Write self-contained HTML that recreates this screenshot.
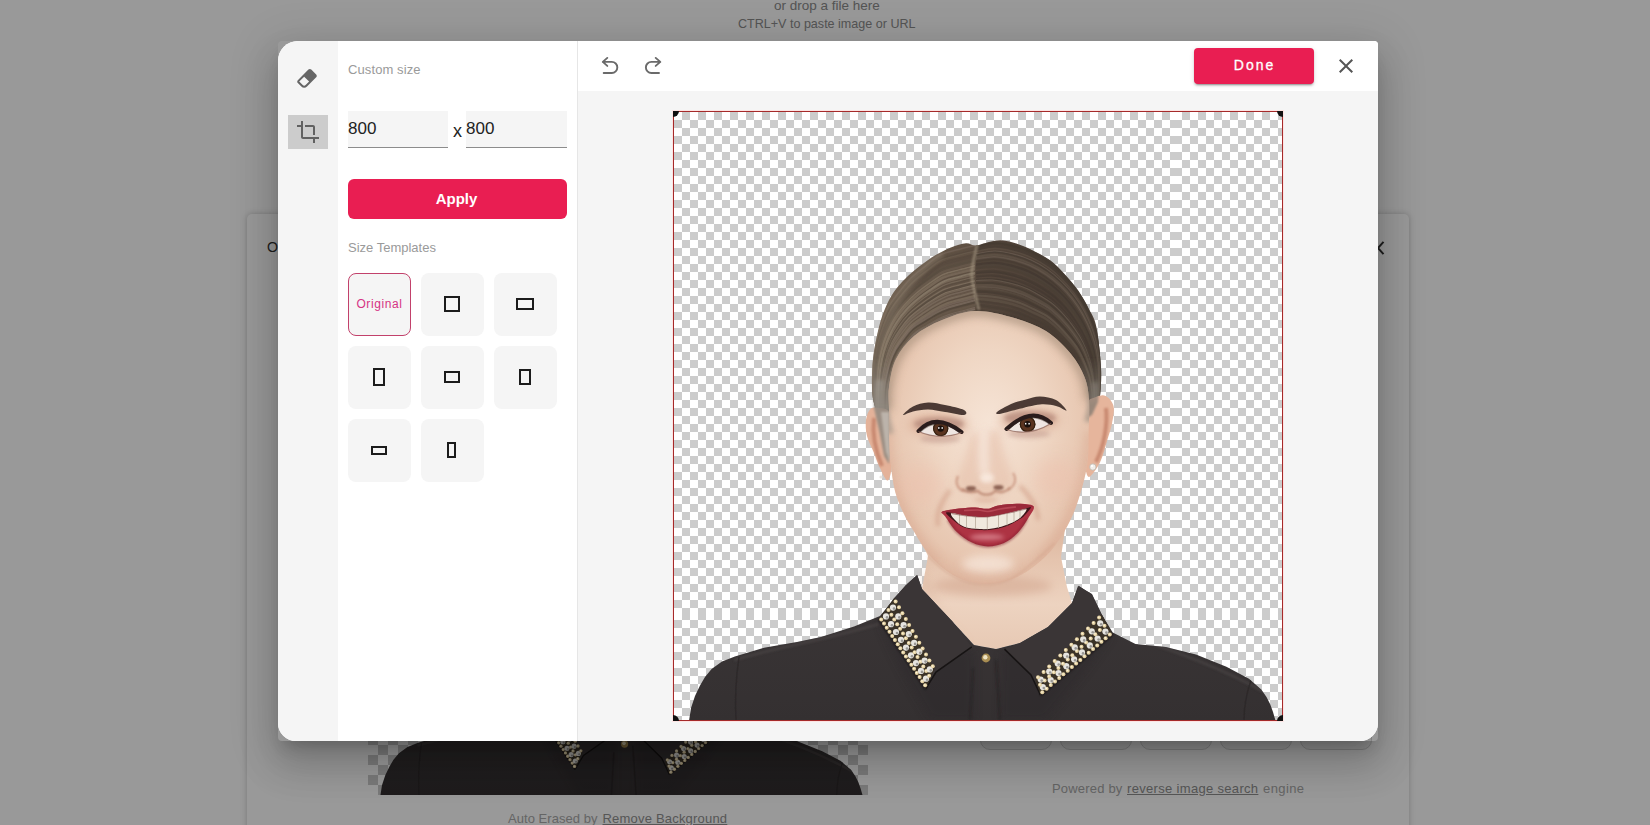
<!DOCTYPE html>
<html>
<head>
<meta charset="utf-8">
<title>Crop</title>
<style>
*{box-sizing:border-box;margin:0;padding:0}
html,body{width:1650px;height:825px;overflow:hidden;background:#fff;font-family:"Liberation Sans",sans-serif}
.abs{position:absolute}
#page{position:absolute;left:0;top:0;width:1650px;height:825px;overflow:hidden;background:#fff}
.bgtxt{position:absolute;white-space:nowrap;color:#555;font-size:13px}
#card{position:absolute;left:247px;top:214px;width:1162px;height:700px;border-radius:5px;background:#fff;box-shadow:0 0 6px rgba(0,0,0,.22)}
#overlay{position:absolute;left:0;top:0;width:1650px;height:825px;background:rgba(0,0,0,.4)}
#modal{position:absolute;left:278px;top:41px;width:1100px;height:700px;border-radius:20px 4px 18px 18px;background:#fff;overflow:hidden}
#mshadow{position:absolute;left:278px;top:41px;width:1100px;height:700px;border-radius:4px;box-shadow:0 11px 15px -7px rgba(0,0,0,.2),0 24px 38px 3px rgba(0,0,0,.14),0 9px 46px 8px rgba(0,0,0,.12)}
#side{position:absolute;left:0;top:0;width:60px;height:700px;background:#f5f5f5}
#panel{position:absolute;left:60px;top:0;width:239px;height:700px;background:#fff}
#vline{position:absolute;left:299px;top:0;width:1px;height:700px;background:#e6e6e6}
#topbar{position:absolute;left:300px;top:0;width:800px;height:50px;background:#fff}
#canvas{position:absolute;left:300px;top:50px;width:800px;height:650px;background:#f5f5f5}
.lbl{position:absolute;color:#9a9a9a;font-size:13px;white-space:nowrap}
.inp{position:absolute;top:70px;width:100px;height:37px;background:#f5f5f5;border-bottom:1px solid #8c8c8c;color:#222;font-size:17px;line-height:35px;padding-left:0}
.btn{position:absolute;background:#e91e52;color:#fff;text-align:center;white-space:nowrap}
.tile{position:absolute;width:63px;height:63px;border-radius:8px;background:#f5f5f5}
.tile i{position:absolute;border:2px solid #1c1c1c;display:block}
.ck{position:absolute;background:repeating-conic-gradient(#ccc 0 25%,#fff 0 50%) 0 0/16px 16px}
.ck10{background:repeating-conic-gradient(#fff 0 25%,#ccc 0 50%) 0 0/20px 20px}
</style>
</head>
<body>
<svg width="0" height="0" style="position:absolute">
<defs>
<symbol id="portrait" viewBox="0 0 608 608">
<defs>
<radialGradient id="gFace" cx="0.5" cy="0.42" r="0.62">
 <stop offset="0" stop-color="#f6e4d6"/><stop offset="0.45" stop-color="#efd6c3"/><stop offset="0.8" stop-color="#e7c6b0"/><stop offset="1" stop-color="#dcb199"/>
</radialGradient>
<linearGradient id="gNeck" x1="0" y1="0" x2="0" y2="1">
 <stop offset="0" stop-color="#dab49c"/><stop offset="0.3" stop-color="#e5c4ae"/><stop offset="0.65" stop-color="#edd3c0"/><stop offset="1" stop-color="#e7c9b4"/>
</linearGradient>
<linearGradient id="gHair" x1="0" y1="0" x2="1" y2="0">
 <stop offset="0" stop-color="#7b6b5a"/><stop offset="0.2" stop-color="#645547"/><stop offset="0.44" stop-color="#5f5043"/><stop offset="0.46" stop-color="#55473c"/><stop offset="0.8" stop-color="#4c3f36"/><stop offset="1" stop-color="#57493f"/>
</linearGradient>
<linearGradient id="gShirt" x1="0" y1="0" x2="0" y2="1">
 <stop offset="0" stop-color="#3b3637"/><stop offset="1" stop-color="#343031"/>
</linearGradient>
<linearGradient id="gGL" gradientUnits="userSpaceOnUse" x1="0" y1="245" x2="0" y2="295"><stop offset="0" stop-color="#8f887f" stop-opacity="0"/><stop offset="1" stop-color="#8f887f" stop-opacity="0.85"/></linearGradient>
<linearGradient id="gGR" gradientUnits="userSpaceOnUse" x1="0" y1="245" x2="0" y2="292"><stop offset="0" stop-color="#80786f" stop-opacity="0"/><stop offset="1" stop-color="#80786f" stop-opacity="0.75"/></linearGradient>
<linearGradient id="gEar" x1="0" y1="0" x2="1" y2="0">
 <stop offset="0" stop-color="#e7b9a0"/><stop offset="1" stop-color="#d39a80"/>
</linearGradient>
<filter id="b2" filterUnits="userSpaceOnUse" x="0" y="0" width="608" height="608"><feGaussianBlur stdDeviation="2"/></filter>
<filter id="b4" filterUnits="userSpaceOnUse" x="0" y="0" width="608" height="608"><feGaussianBlur stdDeviation="4"/></filter>
<filter id="b8" filterUnits="userSpaceOnUse" x="0" y="0" width="608" height="608"><feGaussianBlur stdDeviation="8"/></filter>
<filter id="b1" filterUnits="userSpaceOnUse" x="0" y="0" width="608" height="608"><feGaussianBlur stdDeviation="0.8"/></filter>
<filter id="b05" filterUnits="userSpaceOnUse" x="0" y="0" width="608" height="608"><feGaussianBlur stdDeviation="0.5"/></filter>
<clipPath id="cFace"><path id="facePath" d="M215.0 298.0C215.0 290.2 213.8 283.5 215.0 275.0C216.2 266.5 217.8 255.5 222.0 247.0C226.2 238.5 232.3 230.5 240.0 224.0C247.7 217.5 257.8 212.2 268.0 208.0C278.2 203.8 289.5 199.5 301.0 199.0C312.5 198.5 325.2 201.7 337.0 205.0C348.8 208.3 362.0 212.8 372.0 219.0C382.0 225.2 390.6 234.3 397.0 242.0C403.4 249.7 407.5 257.3 410.5 265.0C413.5 272.7 414.3 278.5 415.0 288.0C415.7 297.5 414.8 311.0 414.5 322.0C414.2 333.0 414.9 342.3 413.0 354.0C411.1 365.7 406.8 381.0 403.0 392.0C399.2 403.0 395.2 411.3 390.0 420.0C384.8 428.7 379.5 436.7 372.0 444.0C364.5 451.3 354.5 459.3 345.0 464.0C335.5 468.7 325.0 471.7 315.0 472.0C305.0 472.3 294.5 470.3 285.0 466.0C275.5 461.7 265.7 454.0 258.0 446.0C250.3 438.0 243.8 425.7 239.0 418.0C234.2 410.3 232.0 406.5 229.0 400.0C226.0 393.5 223.1 387.3 221.0 379.0C218.9 370.7 217.5 359.5 216.5 350.0C215.5 340.5 215.2 330.7 215.0 322.0C214.8 313.3 215.0 305.8 215.0 298.0Z"/></clipPath>
<clipPath id="cHair"><path d="M213.0 322.0C212.2 321.3 211.3 317.2 210.0 314.0C208.7 310.8 206.7 306.8 205.0 303.0C203.3 299.2 201.2 295.7 200.0 291.0C198.8 286.3 198.2 282.3 198.0 275.0C197.8 267.7 198.0 256.3 199.0 247.0C200.0 237.7 202.1 227.2 204.0 219.0C205.9 210.8 207.9 204.4 210.5 198.0C213.1 191.6 216.0 185.8 219.5 180.5C223.0 175.2 227.0 171.0 231.5 166.5C236.0 162.0 241.5 157.5 246.6 153.6C251.7 149.7 256.8 146.0 261.8 143.0C266.9 140.0 271.9 137.3 276.9 135.4C281.9 133.5 287.9 131.6 292.0 131.3C296.1 131.0 297.9 133.7 301.2 133.6C304.5 133.5 307.5 131.8 311.8 130.9C316.1 130.0 321.3 128.1 326.9 128.3C332.4 128.6 339.6 130.6 345.1 132.4C350.7 134.2 355.0 136.5 360.2 139.2C365.4 141.8 371.1 144.5 376.2 148.3C381.2 152.1 385.8 156.9 390.5 161.9C395.2 166.9 400.1 172.8 404.2 178.6C408.2 184.4 411.8 190.7 414.8 196.8C417.8 202.9 420.4 205.1 422.4 215.0C424.4 224.9 426.4 244.5 427.0 256.0C427.6 267.5 426.7 277.0 426.0 284.0C425.3 291.0 424.2 294.0 423.0 298.0C421.8 302.0 420.3 305.5 419.0 308.0C417.7 310.5 416.8 314.3 415.0 313.0C413.2 311.7 423.8 303.8 408.0 300.0C392.2 296.2 350.5 290.0 320.0 290.0C289.5 290.0 242.5 295.3 225.0 300.0C207.5 304.7 217.0 314.3 215.0 318.0C213.0 321.7 213.8 322.7 213.0 322.0Z"/></clipPath>
<clipPath id="cShirt"><path d="M15.0 609.0L17.0 596.0L21.0 584.0L26.0 573.6L31.0 565.0L37.6 557.1L48.0 549.5L60.9 544.5L90.0 535.8L123.0 530.0L147.0 525.0L180.0 514.5L206.0 504.0L221.0 486.0L232.0 473.0L243.0 463.0L248.0 477.0L262.0 492.0L278.0 509.0L300.0 533.0L322.0 537.0L346.0 531.0L374.0 515.0L398.0 491.0L404.0 474.0L418.0 482.0L427.6 502.2L438.7 520.6L461.5 531.9L491.8 535.0L522.0 542.5L552.4 554.7L575.0 566.8L587.2 577.4L592.5 585.0L596.3 592.5L599.0 600.0L601.6 609.0Z"/></clipPath>
</defs>
<path d="M240.0 415.0L254.0 444.0L250.0 466.0L248.0 477.0L262.0 492.0L278.0 509.0L300.0 533.0L322.0 537.0L346.0 531.0L374.0 515.0L398.0 491.0L393.0 475.0L387.0 445.0L392.0 410.0Z" fill="url(#gNeck)"/>
<ellipse cx="318" cy="474" rx="60" ry="10" fill="#c9977f" opacity="0.4" filter="url(#b4)"/><path d="M250 445C250 470 262 495 300 533L278 509L248 477Z" fill="#cfa088" opacity="0.35" filter="url(#b4)"/>
<path d="M15.0 609.0L17.0 596.0L21.0 584.0L26.0 573.6L31.0 565.0L37.6 557.1L48.0 549.5L60.9 544.5L90.0 535.8L123.0 530.0L147.0 525.0L180.0 514.5L206.0 504.0L221.0 486.0L232.0 473.0L243.0 463.0L248.0 477.0L262.0 492.0L278.0 509.0L300.0 533.0L322.0 537.0L346.0 531.0L374.0 515.0L398.0 491.0L404.0 474.0L418.0 482.0L427.6 502.2L438.7 520.6L461.5 531.9L491.8 535.0L522.0 542.5L552.4 554.7L575.0 566.8L587.2 577.4L592.5 585.0L596.3 592.5L599.0 600.0L601.6 609.0Z" fill="url(#gShirt)"/>
<g clip-path="url(#cShirt)">
<path d="M60 548C100 536 150 528 205 512" stroke="#4a4445" stroke-width="3" fill="none" opacity="0.7" filter="url(#b1)"/>
<path d="M445 520C490 536 540 552 590 580" stroke="#4a4445" stroke-width="3" fill="none" opacity="0.7" filter="url(#b1)"/>
<path d="M299 556L296 608M322 548L326 608" stroke="#211d1e" stroke-width="2" fill="none" opacity="0.5" filter="url(#b1)"/>
<path d="M65 545C62 565 61 590 62 608" stroke="#2a2627" stroke-width="1.5" fill="none" opacity="0.7" filter="url(#b05)"/>
<path d="M577 568C573 580 570 595 570 608" stroke="#2a2627" stroke-width="1.5" fill="none" opacity="0.7" filter="url(#b05)"/>
<path d="M205 507C215 540 240 580 256 608L300 608L300 540Z" fill="#2c2829" opacity="0.35" filter="url(#b4)"/>
<path d="M438 522C420 550 390 585 372 608L326 608L328 540Z" fill="#2c2829" opacity="0.35" filter="url(#b4)"/>
</g>
<path d="M243.3 462.9L232.0 473.0L220.4 485.8L205.1 506.5L252.0 576.3L262.0 560.0L297.8 534.9L278.0 509.0L262.0 492.0L248.0 477.0Z" fill="#3a3536"/>
<path d="M404.7 473.8L417.8 482.5L427.6 502.2L438.5 521.8L366.5 582.9L357.0 563.0L330.5 537.1L346.0 531.0L374.0 515.0L398.0 491.0Z" fill="#3a3536"/>
<path d="M252 576.3L262 560L297.8 534.9" stroke="#171414" stroke-width="1.6" fill="none"/>
<path d="M366.5 582.9L357 563L330.5 537.1" stroke="#171414" stroke-width="1.6" fill="none"/>
<path d="M205 507L252 577" stroke="#151212" stroke-width="2" fill="none" opacity="0.8" filter="url(#b1)"/>
<path d="M438.5 522L366.5 583" stroke="#151212" stroke-width="2" fill="none" opacity="0.8" filter="url(#b1)"/>
<path d="M205.1 506.5L220.4 485.8L260.7 556.7L252.0 576.3Z" fill="#3a3227"/><circle cx="207.2" cy="507.5" r="2.0" fill="#e6d3a4"/><circle cx="206.9" cy="507.2" r="0.8" fill="#fff6dc"/><circle cx="210.0" cy="511.6" r="2.0" fill="#e6d3a4"/><circle cx="209.7" cy="511.3" r="0.8" fill="#fff6dc"/><circle cx="212.7" cy="515.7" r="2.0" fill="#e6d3a4"/><circle cx="212.4" cy="515.4" r="0.8" fill="#fff6dc"/><circle cx="215.5" cy="519.8" r="2.0" fill="#e6d3a4"/><circle cx="215.2" cy="519.5" r="0.8" fill="#fff6dc"/><circle cx="218.2" cy="524.0" r="2.0" fill="#e6d3a4"/><circle cx="217.9" cy="523.7" r="0.8" fill="#fff6dc"/><circle cx="220.9" cy="528.1" r="2.0" fill="#e6d3a4"/><circle cx="220.6" cy="527.8" r="0.8" fill="#fff6dc"/><circle cx="223.7" cy="532.2" r="2.0" fill="#e6d3a4"/><circle cx="223.4" cy="531.9" r="0.8" fill="#fff6dc"/><circle cx="226.4" cy="536.3" r="2.0" fill="#e6d3a4"/><circle cx="226.1" cy="536.0" r="0.8" fill="#fff6dc"/><circle cx="229.2" cy="540.4" r="2.0" fill="#e6d3a4"/><circle cx="228.8" cy="540.1" r="0.8" fill="#fff6dc"/><circle cx="231.9" cy="544.5" r="2.0" fill="#e6d3a4"/><circle cx="231.6" cy="544.2" r="0.8" fill="#fff6dc"/><circle cx="234.6" cy="548.6" r="2.0" fill="#e6d3a4"/><circle cx="234.3" cy="548.3" r="0.8" fill="#fff6dc"/><circle cx="237.4" cy="552.7" r="2.0" fill="#e6d3a4"/><circle cx="237.1" cy="552.4" r="0.8" fill="#fff6dc"/><circle cx="240.1" cy="556.8" r="2.0" fill="#e6d3a4"/><circle cx="239.8" cy="556.5" r="0.8" fill="#fff6dc"/><circle cx="242.8" cy="560.9" r="2.0" fill="#e6d3a4"/><circle cx="242.5" cy="560.6" r="0.8" fill="#fff6dc"/><circle cx="245.6" cy="565.0" r="2.0" fill="#e6d3a4"/><circle cx="245.3" cy="564.7" r="0.8" fill="#fff6dc"/><circle cx="248.3" cy="569.2" r="2.0" fill="#e6d3a4"/><circle cx="248.0" cy="568.9" r="0.8" fill="#fff6dc"/><circle cx="251.1" cy="573.3" r="2.0" fill="#e6d3a4"/><circle cx="250.8" cy="573.0" r="0.8" fill="#fff6dc"/><circle cx="212.0" cy="504.4" r="3.1" fill="#e6e4df"/><circle cx="213.0" cy="505.4" r="1.3" fill="#9a9894"/><circle cx="217.0" cy="512.2" r="3.1" fill="#e6e4df"/><circle cx="218.0" cy="513.2" r="1.3" fill="#9a9894"/><circle cx="222.0" cy="520.0" r="3.1" fill="#e6e4df"/><circle cx="223.0" cy="521.0" r="1.3" fill="#9a9894"/><circle cx="227.0" cy="527.8" r="3.1" fill="#e6e4df"/><circle cx="228.0" cy="528.8" r="1.3" fill="#9a9894"/><circle cx="232.0" cy="535.6" r="3.1" fill="#e6e4df"/><circle cx="233.0" cy="536.6" r="1.3" fill="#9a9894"/><circle cx="237.0" cy="543.3" r="3.1" fill="#e6e4df"/><circle cx="238.0" cy="544.3" r="1.3" fill="#9a9894"/><circle cx="242.0" cy="551.1" r="3.1" fill="#e6e4df"/><circle cx="243.0" cy="552.1" r="1.3" fill="#9a9894"/><circle cx="247.0" cy="558.9" r="3.1" fill="#e6e4df"/><circle cx="248.0" cy="559.9" r="1.3" fill="#9a9894"/><circle cx="252.0" cy="566.7" r="3.1" fill="#e6e4df"/><circle cx="253.0" cy="567.7" r="1.3" fill="#9a9894"/><circle cx="214.5" cy="498.1" r="2.0" fill="#e6d3a4"/><circle cx="214.2" cy="497.8" r="0.8" fill="#fff6dc"/><circle cx="217.4" cy="502.8" r="2.0" fill="#e6d3a4"/><circle cx="217.1" cy="502.5" r="0.8" fill="#fff6dc"/><circle cx="220.3" cy="507.5" r="2.0" fill="#e6d3a4"/><circle cx="220.0" cy="507.2" r="0.8" fill="#fff6dc"/><circle cx="223.2" cy="512.2" r="2.0" fill="#e6d3a4"/><circle cx="222.9" cy="511.9" r="0.8" fill="#fff6dc"/><circle cx="226.1" cy="516.8" r="2.0" fill="#e6d3a4"/><circle cx="225.8" cy="516.5" r="0.8" fill="#fff6dc"/><circle cx="229.0" cy="521.5" r="2.0" fill="#e6d3a4"/><circle cx="228.7" cy="521.2" r="0.8" fill="#fff6dc"/><circle cx="231.9" cy="526.2" r="2.0" fill="#e6d3a4"/><circle cx="231.6" cy="525.9" r="0.8" fill="#fff6dc"/><circle cx="234.8" cy="530.9" r="2.0" fill="#e6d3a4"/><circle cx="234.5" cy="530.6" r="0.8" fill="#fff6dc"/><circle cx="237.7" cy="535.6" r="2.0" fill="#e6d3a4"/><circle cx="237.4" cy="535.3" r="0.8" fill="#fff6dc"/><circle cx="240.6" cy="540.3" r="2.0" fill="#e6d3a4"/><circle cx="240.3" cy="540.0" r="0.8" fill="#fff6dc"/><circle cx="243.5" cy="545.0" r="2.0" fill="#e6d3a4"/><circle cx="243.2" cy="544.7" r="0.8" fill="#fff6dc"/><circle cx="246.4" cy="549.7" r="2.0" fill="#e6d3a4"/><circle cx="246.1" cy="549.4" r="0.8" fill="#fff6dc"/><circle cx="249.3" cy="554.4" r="2.0" fill="#e6d3a4"/><circle cx="249.0" cy="554.1" r="0.8" fill="#fff6dc"/><circle cx="252.2" cy="559.1" r="2.0" fill="#e6d3a4"/><circle cx="251.9" cy="558.8" r="0.8" fill="#fff6dc"/><circle cx="255.1" cy="563.8" r="2.0" fill="#e6d3a4"/><circle cx="254.8" cy="563.5" r="0.8" fill="#fff6dc"/><circle cx="219.0" cy="495.6" r="3.1" fill="#e6e4df"/><circle cx="220.0" cy="496.6" r="1.3" fill="#9a9894"/><circle cx="224.3" cy="504.4" r="3.1" fill="#e6e4df"/><circle cx="225.3" cy="505.4" r="1.3" fill="#9a9894"/><circle cx="229.6" cy="513.2" r="3.1" fill="#e6e4df"/><circle cx="230.6" cy="514.2" r="1.3" fill="#9a9894"/><circle cx="234.8" cy="522.1" r="3.1" fill="#e6e4df"/><circle cx="235.8" cy="523.1" r="1.3" fill="#9a9894"/><circle cx="240.1" cy="530.9" r="3.1" fill="#e6e4df"/><circle cx="241.1" cy="531.9" r="1.3" fill="#9a9894"/><circle cx="245.3" cy="539.7" r="3.1" fill="#e6e4df"/><circle cx="246.3" cy="540.7" r="1.3" fill="#9a9894"/><circle cx="250.6" cy="548.6" r="3.1" fill="#e6e4df"/><circle cx="251.6" cy="549.6" r="1.3" fill="#9a9894"/><circle cx="255.8" cy="557.4" r="3.1" fill="#e6e4df"/><circle cx="256.8" cy="558.4" r="1.3" fill="#9a9894"/><circle cx="221.6" cy="489.4" r="2.0" fill="#e6d3a4"/><circle cx="221.3" cy="489.1" r="0.8" fill="#fff6dc"/><circle cx="225.0" cy="495.3" r="2.0" fill="#e6d3a4"/><circle cx="224.7" cy="495.0" r="0.8" fill="#fff6dc"/><circle cx="228.4" cy="501.2" r="2.0" fill="#e6d3a4"/><circle cx="228.1" cy="500.9" r="0.8" fill="#fff6dc"/><circle cx="231.8" cy="507.1" r="2.0" fill="#e6d3a4"/><circle cx="231.5" cy="506.8" r="0.8" fill="#fff6dc"/><circle cx="235.1" cy="513.0" r="2.0" fill="#e6d3a4"/><circle cx="234.8" cy="512.7" r="0.8" fill="#fff6dc"/><circle cx="238.5" cy="518.9" r="2.0" fill="#e6d3a4"/><circle cx="238.2" cy="518.6" r="0.8" fill="#fff6dc"/><circle cx="241.9" cy="524.8" r="2.0" fill="#e6d3a4"/><circle cx="241.6" cy="524.5" r="0.8" fill="#fff6dc"/><circle cx="245.3" cy="530.7" r="2.0" fill="#e6d3a4"/><circle cx="245.0" cy="530.4" r="0.8" fill="#fff6dc"/><circle cx="248.6" cy="536.6" r="2.0" fill="#e6d3a4"/><circle cx="248.3" cy="536.3" r="0.8" fill="#fff6dc"/><circle cx="252.0" cy="542.5" r="2.0" fill="#e6d3a4"/><circle cx="251.7" cy="542.2" r="0.8" fill="#fff6dc"/><circle cx="255.4" cy="548.4" r="2.0" fill="#e6d3a4"/><circle cx="255.1" cy="548.1" r="0.8" fill="#fff6dc"/><circle cx="258.8" cy="554.3" r="2.0" fill="#e6d3a4"/><circle cx="258.5" cy="554.0" r="0.8" fill="#fff6dc"/>
<path d="M438.5 521.8L427.6 502.2L361.1 567.6L366.5 582.9Z" fill="#3a3227"/><circle cx="435.8" cy="522.6" r="2.0" fill="#e6d3a4"/><circle cx="435.5" cy="522.3" r="0.8" fill="#fff6dc"/><circle cx="431.6" cy="526.2" r="2.0" fill="#e6d3a4"/><circle cx="431.3" cy="525.9" r="0.8" fill="#fff6dc"/><circle cx="427.4" cy="529.8" r="2.0" fill="#e6d3a4"/><circle cx="427.1" cy="529.5" r="0.8" fill="#fff6dc"/><circle cx="423.2" cy="533.4" r="2.0" fill="#e6d3a4"/><circle cx="422.9" cy="533.1" r="0.8" fill="#fff6dc"/><circle cx="419.0" cy="537.1" r="2.0" fill="#e6d3a4"/><circle cx="418.7" cy="536.8" r="0.8" fill="#fff6dc"/><circle cx="414.7" cy="540.7" r="2.0" fill="#e6d3a4"/><circle cx="414.4" cy="540.4" r="0.8" fill="#fff6dc"/><circle cx="410.5" cy="544.3" r="2.0" fill="#e6d3a4"/><circle cx="410.2" cy="544.0" r="0.8" fill="#fff6dc"/><circle cx="406.3" cy="547.9" r="2.0" fill="#e6d3a4"/><circle cx="406.0" cy="547.6" r="0.8" fill="#fff6dc"/><circle cx="402.1" cy="551.5" r="2.0" fill="#e6d3a4"/><circle cx="401.8" cy="551.2" r="0.8" fill="#fff6dc"/><circle cx="397.9" cy="555.1" r="2.0" fill="#e6d3a4"/><circle cx="397.6" cy="554.8" r="0.8" fill="#fff6dc"/><circle cx="393.7" cy="558.7" r="2.0" fill="#e6d3a4"/><circle cx="393.4" cy="558.4" r="0.8" fill="#fff6dc"/><circle cx="389.4" cy="562.3" r="2.0" fill="#e6d3a4"/><circle cx="389.1" cy="562.0" r="0.8" fill="#fff6dc"/><circle cx="385.2" cy="565.9" r="2.0" fill="#e6d3a4"/><circle cx="384.9" cy="565.6" r="0.8" fill="#fff6dc"/><circle cx="381.0" cy="569.5" r="2.0" fill="#e6d3a4"/><circle cx="380.7" cy="569.2" r="0.8" fill="#fff6dc"/><circle cx="376.8" cy="573.1" r="2.0" fill="#e6d3a4"/><circle cx="376.5" cy="572.8" r="0.8" fill="#fff6dc"/><circle cx="372.6" cy="576.7" r="2.0" fill="#e6d3a4"/><circle cx="372.3" cy="576.4" r="0.8" fill="#fff6dc"/><circle cx="368.3" cy="580.3" r="2.0" fill="#e6d3a4"/><circle cx="368.0" cy="580.0" r="0.8" fill="#fff6dc"/><circle cx="431.4" cy="519.6" r="3.1" fill="#e6e4df"/><circle cx="432.4" cy="520.6" r="1.3" fill="#9a9894"/><circle cx="423.6" cy="526.5" r="3.1" fill="#e6e4df"/><circle cx="424.6" cy="527.5" r="1.3" fill="#9a9894"/><circle cx="415.8" cy="533.4" r="3.1" fill="#e6e4df"/><circle cx="416.8" cy="534.4" r="1.3" fill="#9a9894"/><circle cx="408.0" cy="540.4" r="3.1" fill="#e6e4df"/><circle cx="409.0" cy="541.4" r="1.3" fill="#9a9894"/><circle cx="400.1" cy="547.3" r="3.1" fill="#e6e4df"/><circle cx="401.1" cy="548.3" r="1.3" fill="#9a9894"/><circle cx="392.3" cy="554.2" r="3.1" fill="#e6e4df"/><circle cx="393.3" cy="555.2" r="1.3" fill="#9a9894"/><circle cx="384.5" cy="561.1" r="3.1" fill="#e6e4df"/><circle cx="385.5" cy="562.1" r="1.3" fill="#9a9894"/><circle cx="376.7" cy="568.1" r="3.1" fill="#e6e4df"/><circle cx="377.7" cy="569.1" r="1.3" fill="#9a9894"/><circle cx="368.8" cy="575.0" r="3.1" fill="#e6e4df"/><circle cx="369.8" cy="576.0" r="1.3" fill="#9a9894"/><circle cx="430.5" cy="513.7" r="2.0" fill="#e6d3a4"/><circle cx="430.2" cy="513.4" r="0.8" fill="#fff6dc"/><circle cx="425.9" cy="517.9" r="2.0" fill="#e6d3a4"/><circle cx="425.6" cy="517.6" r="0.8" fill="#fff6dc"/><circle cx="421.3" cy="522.2" r="2.0" fill="#e6d3a4"/><circle cx="421.0" cy="521.9" r="0.8" fill="#fff6dc"/><circle cx="416.7" cy="526.4" r="2.0" fill="#e6d3a4"/><circle cx="416.4" cy="526.1" r="0.8" fill="#fff6dc"/><circle cx="412.1" cy="530.6" r="2.0" fill="#e6d3a4"/><circle cx="411.8" cy="530.3" r="0.8" fill="#fff6dc"/><circle cx="407.5" cy="534.8" r="2.0" fill="#e6d3a4"/><circle cx="407.2" cy="534.5" r="0.8" fill="#fff6dc"/><circle cx="402.9" cy="539.1" r="2.0" fill="#e6d3a4"/><circle cx="402.6" cy="538.8" r="0.8" fill="#fff6dc"/><circle cx="398.3" cy="543.3" r="2.0" fill="#e6d3a4"/><circle cx="398.0" cy="543.0" r="0.8" fill="#fff6dc"/><circle cx="393.7" cy="547.5" r="2.0" fill="#e6d3a4"/><circle cx="393.4" cy="547.2" r="0.8" fill="#fff6dc"/><circle cx="389.0" cy="551.7" r="2.0" fill="#e6d3a4"/><circle cx="388.7" cy="551.4" r="0.8" fill="#fff6dc"/><circle cx="384.4" cy="555.9" r="2.0" fill="#e6d3a4"/><circle cx="384.1" cy="555.6" r="0.8" fill="#fff6dc"/><circle cx="379.8" cy="560.2" r="2.0" fill="#e6d3a4"/><circle cx="379.5" cy="559.9" r="0.8" fill="#fff6dc"/><circle cx="375.2" cy="564.4" r="2.0" fill="#e6d3a4"/><circle cx="374.9" cy="564.1" r="0.8" fill="#fff6dc"/><circle cx="370.6" cy="568.6" r="2.0" fill="#e6d3a4"/><circle cx="370.3" cy="568.3" r="0.8" fill="#fff6dc"/><circle cx="366.0" cy="572.8" r="2.0" fill="#e6d3a4"/><circle cx="365.7" cy="572.5" r="0.8" fill="#fff6dc"/><circle cx="426.2" cy="511.3" r="3.1" fill="#e6e4df"/><circle cx="427.2" cy="512.3" r="1.3" fill="#9a9894"/><circle cx="417.7" cy="519.3" r="3.1" fill="#e6e4df"/><circle cx="418.7" cy="520.3" r="1.3" fill="#9a9894"/><circle cx="409.2" cy="527.4" r="3.1" fill="#e6e4df"/><circle cx="410.2" cy="528.4" r="1.3" fill="#9a9894"/><circle cx="400.7" cy="535.4" r="3.1" fill="#e6e4df"/><circle cx="401.7" cy="536.4" r="1.3" fill="#9a9894"/><circle cx="392.2" cy="543.5" r="3.1" fill="#e6e4df"/><circle cx="393.2" cy="544.5" r="1.3" fill="#9a9894"/><circle cx="383.7" cy="551.5" r="3.1" fill="#e6e4df"/><circle cx="384.7" cy="552.5" r="1.3" fill="#9a9894"/><circle cx="375.2" cy="559.5" r="3.1" fill="#e6e4df"/><circle cx="376.2" cy="560.5" r="1.3" fill="#9a9894"/><circle cx="366.7" cy="567.6" r="3.1" fill="#e6e4df"/><circle cx="367.7" cy="568.6" r="1.3" fill="#9a9894"/><circle cx="425.1" cy="505.5" r="2.0" fill="#e6d3a4"/><circle cx="424.8" cy="505.2" r="0.8" fill="#fff6dc"/><circle cx="419.6" cy="510.9" r="2.0" fill="#e6d3a4"/><circle cx="419.3" cy="510.6" r="0.8" fill="#fff6dc"/><circle cx="414.0" cy="516.4" r="2.0" fill="#e6d3a4"/><circle cx="413.7" cy="516.1" r="0.8" fill="#fff6dc"/><circle cx="408.5" cy="521.8" r="2.0" fill="#e6d3a4"/><circle cx="408.2" cy="521.5" r="0.8" fill="#fff6dc"/><circle cx="402.9" cy="527.3" r="2.0" fill="#e6d3a4"/><circle cx="402.6" cy="527.0" r="0.8" fill="#fff6dc"/><circle cx="397.4" cy="532.7" r="2.0" fill="#e6d3a4"/><circle cx="397.1" cy="532.4" r="0.8" fill="#fff6dc"/><circle cx="391.8" cy="538.1" r="2.0" fill="#e6d3a4"/><circle cx="391.5" cy="537.8" r="0.8" fill="#fff6dc"/><circle cx="386.3" cy="543.6" r="2.0" fill="#e6d3a4"/><circle cx="386.0" cy="543.3" r="0.8" fill="#fff6dc"/><circle cx="380.7" cy="549.0" r="2.0" fill="#e6d3a4"/><circle cx="380.4" cy="548.7" r="0.8" fill="#fff6dc"/><circle cx="375.2" cy="554.5" r="2.0" fill="#e6d3a4"/><circle cx="374.9" cy="554.2" r="0.8" fill="#fff6dc"/><circle cx="369.6" cy="559.9" r="2.0" fill="#e6d3a4"/><circle cx="369.3" cy="559.6" r="0.8" fill="#fff6dc"/><circle cx="364.0" cy="565.3" r="2.0" fill="#e6d3a4"/><circle cx="363.7" cy="565.0" r="0.8" fill="#fff6dc"/>
<circle cx="312" cy="546" r="4.4" fill="#a88d52"/><circle cx="311.3" cy="545.2" r="2.2" fill="#efe4c4"/>
<path d="M213.0 322.0C212.2 321.3 211.3 317.2 210.0 314.0C208.7 310.8 206.7 306.8 205.0 303.0C203.3 299.2 201.2 295.7 200.0 291.0C198.8 286.3 198.2 282.3 198.0 275.0C197.8 267.7 198.0 256.3 199.0 247.0C200.0 237.7 202.1 227.2 204.0 219.0C205.9 210.8 207.9 204.4 210.5 198.0C213.1 191.6 216.0 185.8 219.5 180.5C223.0 175.2 227.0 171.0 231.5 166.5C236.0 162.0 241.5 157.5 246.6 153.6C251.7 149.7 256.8 146.0 261.8 143.0C266.9 140.0 271.9 137.3 276.9 135.4C281.9 133.5 287.9 131.6 292.0 131.3C296.1 131.0 297.9 133.7 301.2 133.6C304.5 133.5 307.5 131.8 311.8 130.9C316.1 130.0 321.3 128.1 326.9 128.3C332.4 128.6 339.6 130.6 345.1 132.4C350.7 134.2 355.0 136.5 360.2 139.2C365.4 141.8 371.1 144.5 376.2 148.3C381.2 152.1 385.8 156.9 390.5 161.9C395.2 166.9 400.1 172.8 404.2 178.6C408.2 184.4 411.8 190.7 414.8 196.8C417.8 202.9 420.4 205.1 422.4 215.0C424.4 224.9 426.4 244.5 427.0 256.0C427.6 267.5 426.7 277.0 426.0 284.0C425.3 291.0 424.2 294.0 423.0 298.0C421.8 302.0 420.3 305.5 419.0 308.0C417.7 310.5 416.8 314.3 415.0 313.0C413.2 311.7 423.8 303.8 408.0 300.0C392.2 296.2 350.5 290.0 320.0 290.0C289.5 290.0 242.5 295.3 225.0 300.0C207.5 304.7 217.0 314.3 215.0 318.0C213.0 321.7 213.8 322.7 213.0 322.0Z" fill="url(#gHair)"/>
<g clip-path="url(#cHair)">
<path d="M301.0 133.5C298.1 134.2 289.2 136.2 283.3 137.8C277.5 139.4 271.4 140.3 266.1 143.0C260.8 145.6 256.3 150.1 251.6 153.8C246.8 157.6 241.9 161.1 237.6 165.3C233.3 169.6 229.5 174.4 225.8 179.1C222.1 183.9 218.2 188.5 215.2 193.7C212.3 198.9 210.1 204.7 208.0 210.4C205.9 216.0 204.1 221.8 202.6 227.6C201.2 233.5 200.1 239.5 199.4 245.5C198.7 251.5 198.7 257.6 198.5 263.6C198.3 269.7 198.2 275.7 198.1 281.8C198.0 287.8 197.8 293.9 198.1 299.9C198.4 306.0 199.8 315.0 200.1 318.0" stroke="#85766a" stroke-width="1.6" fill="none" opacity="0.37"/>
<path d="M301.0 136.2C298.1 136.9 289.3 138.9 283.6 140.5C277.8 142.0 271.8 142.9 266.5 145.6C261.3 148.2 256.8 152.5 252.1 156.2C247.4 159.8 242.5 163.3 238.2 167.5C234.0 171.6 230.2 176.3 226.5 181.0C222.7 185.6 218.9 190.2 216.0 195.3C213.0 200.5 210.8 206.2 208.7 211.7C206.6 217.3 204.8 222.9 203.3 228.7C201.9 234.5 200.8 240.4 200.1 246.4C199.4 252.3 199.4 258.3 199.2 264.3C198.9 270.2 198.8 276.2 198.7 282.2C198.7 288.2 198.4 294.2 198.7 300.2C199.1 306.1 200.4 315.0 200.7 318.0" stroke="#574b3f" stroke-width="1.6" fill="none" opacity="0.37"/>
<path d="M301.0 137.7C298.1 138.4 289.4 140.3 283.7 141.9C278.0 143.4 272.0 144.4 266.7 147.0C261.5 149.5 257.1 153.8 252.4 157.4C247.7 161.0 242.8 164.5 238.6 168.6C234.3 172.7 230.5 177.3 226.8 181.9C223.1 186.5 219.3 191.1 216.4 196.2C213.4 201.3 211.2 206.9 209.1 212.4C207.0 218.0 205.2 223.6 203.7 229.3C202.3 235.0 201.2 241.0 200.5 246.8C199.8 252.7 199.7 258.7 199.5 264.6C199.3 270.5 199.1 276.5 199.1 282.4C199.0 288.4 198.8 294.3 199.1 300.3C199.4 306.2 200.7 315.0 201.0 318.0" stroke="#4f4439" stroke-width="1.1" fill="none" opacity="0.50"/>
<path d="M301.0 139.2C298.1 139.9 289.5 141.9 283.8 143.4C278.1 144.9 272.2 145.9 267.0 148.4C261.8 151.0 257.3 155.2 252.7 158.7C248.0 162.3 243.2 165.8 238.9 169.8C234.7 173.8 230.9 178.4 227.2 183.0C223.5 187.5 219.7 192.1 216.8 197.1C213.8 202.1 211.6 207.7 209.5 213.2C207.4 218.7 205.6 224.2 204.1 229.9C202.7 235.6 201.6 241.5 200.9 247.3C200.2 253.2 200.1 259.1 199.9 265.0C199.6 270.9 199.5 276.8 199.4 282.7C199.4 288.6 199.1 294.5 199.4 300.4C199.8 306.3 201.0 315.1 201.3 318.0" stroke="#6c5e50" stroke-width="1.1" fill="none" opacity="0.55"/>
<path d="M301.0 142.2C298.2 142.9 289.6 144.9 284.0 146.4C278.4 147.9 272.6 148.8 267.4 151.3C262.3 153.8 257.9 157.9 253.2 161.4C248.6 164.8 243.9 168.2 239.6 172.2C235.4 176.1 231.6 180.5 227.9 185.0C224.2 189.5 220.6 194.0 217.6 198.9C214.7 203.9 212.4 209.3 210.3 214.7C208.2 220.1 206.4 225.6 204.9 231.2C203.5 236.8 202.4 242.6 201.7 248.3C201.0 254.1 200.8 259.9 200.6 265.7C200.3 271.5 200.2 277.3 200.1 283.2C200.1 289.0 199.8 294.8 200.1 300.6C200.5 306.4 201.7 315.1 202.0 318.0" stroke="#4f4439" stroke-width="1.9" fill="none" opacity="0.49"/>
<path d="M301.0 144.2C298.2 144.9 289.7 146.9 284.2 148.4C278.7 149.9 272.8 150.8 267.7 153.2C262.6 155.7 258.2 159.6 253.6 163.1C249.0 166.5 244.3 169.9 240.1 173.7C235.9 177.6 232.1 181.9 228.4 186.3C224.7 190.7 221.1 195.2 218.2 200.1C215.2 205.0 212.9 210.4 210.8 215.7C208.7 221.0 206.9 226.4 205.5 232.0C204.0 237.5 202.9 243.3 202.2 249.0C201.5 254.7 201.3 260.4 201.0 266.2C200.8 271.9 200.7 277.7 200.6 283.5C200.5 289.3 200.3 295.0 200.6 300.8C200.9 306.5 202.1 315.1 202.4 318.0" stroke="#4f4439" stroke-width="1.9" fill="none" opacity="0.40"/>
<path d="M301.0 145.3C298.2 146.0 289.8 147.9 284.3 149.4C278.8 150.9 273.0 151.8 267.9 154.3C262.8 156.7 258.4 160.6 253.8 164.0C249.2 167.4 244.5 170.7 240.4 174.6C236.2 178.4 232.3 182.7 228.7 187.1C225.0 191.4 221.4 195.9 218.5 200.7C215.5 205.6 213.2 210.9 211.1 216.2C209.0 221.5 207.2 226.9 205.7 232.4C204.3 237.9 203.2 243.6 202.5 249.3C201.7 255.0 201.6 260.7 201.3 266.4C201.0 272.2 200.9 277.9 200.8 283.7C200.8 289.4 200.6 295.1 200.9 300.9C201.2 306.6 202.3 315.1 202.6 318.0" stroke="#574b3f" stroke-width="1.9" fill="none" opacity="0.55"/>
<path d="M301.0 147.6C298.2 148.3 289.9 150.3 284.5 151.7C279.0 153.2 273.3 154.1 268.3 156.5C263.2 158.9 258.8 162.7 254.3 166.0C249.7 169.3 245.1 172.7 240.9 176.4C236.7 180.2 232.9 184.3 229.2 188.6C225.6 192.9 222.0 197.3 219.1 202.1C216.2 206.9 213.8 212.2 211.7 217.4C209.6 222.6 207.8 227.9 206.4 233.4C204.9 238.8 203.8 244.5 203.1 250.1C202.3 255.7 202.1 261.3 201.8 267.0C201.5 272.7 201.5 278.4 201.4 284.0C201.3 289.7 201.1 295.4 201.4 301.1C201.7 306.7 202.8 315.2 203.1 318.0" stroke="#574b3f" stroke-width="1.9" fill="none" opacity="0.57"/>
<path d="M301.0 149.1C298.3 149.8 290.0 151.7 284.6 153.2C279.2 154.6 273.5 155.6 268.5 157.9C263.5 160.3 259.1 164.0 254.5 167.3C250.0 170.5 245.4 173.8 241.2 177.6C237.1 181.3 233.2 185.4 229.6 189.6C226.0 193.8 222.4 198.2 219.5 203.0C216.6 207.7 214.2 212.9 212.1 218.1C210.0 223.3 208.2 228.6 206.7 234.0C205.3 239.4 204.2 245.0 203.5 250.6C202.7 256.1 202.5 261.7 202.2 267.4C201.9 273.0 201.8 278.6 201.7 284.3C201.7 289.9 201.5 295.6 201.7 301.2C202.0 306.8 203.1 315.2 203.4 318.0" stroke="#574b3f" stroke-width="1.9" fill="none" opacity="0.57"/>
<path d="M301.0 151.2C298.3 151.9 290.1 153.8 284.8 155.3C279.4 156.7 273.8 157.7 268.8 160.0C263.8 162.3 259.5 165.9 255.0 169.1C250.4 172.3 245.9 175.6 241.7 179.2C237.6 182.9 233.7 186.9 230.1 191.0C226.5 195.2 223.0 199.6 220.1 204.3C217.2 209.0 214.8 214.1 212.7 219.2C210.5 224.3 208.8 229.5 207.3 234.8C205.9 240.2 204.8 245.7 204.0 251.2C203.2 256.7 203.0 262.3 202.7 267.9C202.4 273.4 202.3 279.0 202.2 284.6C202.1 290.2 202.0 295.8 202.2 301.3C202.5 306.9 203.6 315.2 203.9 318.0" stroke="#6c5e50" stroke-width="2.2" fill="none" opacity="0.51"/>
<path d="M301.0 153.8C298.3 154.5 290.3 156.4 285.0 157.9C279.7 159.3 274.1 160.2 269.2 162.5C264.3 164.7 259.9 168.2 255.4 171.4C251.0 174.5 246.5 177.7 242.3 181.3C238.2 184.8 234.3 188.7 230.7 192.8C227.1 196.9 223.7 201.2 220.8 205.8C217.9 210.4 215.5 215.4 213.3 220.5C211.2 225.5 209.4 230.6 208.0 235.9C206.6 241.2 205.5 246.7 204.7 252.1C203.9 257.5 203.6 263.0 203.3 268.5C203.0 274.0 202.9 279.5 202.8 285.0C202.7 290.5 202.6 296.0 202.8 301.5C203.1 307.0 204.2 315.3 204.4 318.0" stroke="#8d7e6c" stroke-width="1.5" fill="none" opacity="0.63"/>
<path d="M301.0 155.4C298.3 156.1 290.3 158.0 285.1 159.4C279.8 160.9 274.3 161.8 269.5 164.0C264.6 166.2 260.2 169.6 255.8 172.7C251.3 175.8 246.8 179.0 242.7 182.5C238.6 186.0 234.7 189.8 231.1 193.9C227.5 197.9 224.1 202.2 221.2 206.8C218.4 211.3 215.9 216.3 213.8 221.2C211.6 226.2 209.9 231.3 208.4 236.6C207.0 241.8 205.9 247.2 205.1 252.6C204.3 258.0 204.0 263.4 203.6 268.9C203.3 274.3 203.3 279.8 203.2 285.3C203.1 290.7 203.0 296.2 203.2 301.7C203.5 307.1 204.5 315.3 204.8 318.0" stroke="#7b6c5c" stroke-width="1.1" fill="none" opacity="0.46"/>
<path d="M301.0 157.1C298.4 157.7 290.4 159.6 285.2 161.0C280.0 162.4 274.6 163.4 269.7 165.6C264.8 167.7 260.5 171.1 256.1 174.1C251.6 177.2 247.2 180.3 243.1 183.8C239.0 187.3 235.1 191.0 231.5 194.9C227.9 198.9 224.6 203.2 221.7 207.7C218.8 212.2 216.3 217.1 214.2 222.1C212.1 227.0 210.3 232.0 208.8 237.2C207.4 242.4 206.3 247.8 205.5 253.1C204.7 258.5 204.4 263.9 204.0 269.3C203.7 274.7 203.6 280.1 203.6 285.5C203.5 291.0 203.3 296.4 203.6 301.8C203.9 307.2 204.9 315.3 205.1 318.0" stroke="#8d7e6c" stroke-width="2.2" fill="none" opacity="0.45"/>
<path d="M301.0 159.8C298.4 160.4 290.6 162.3 285.4 163.7C280.3 165.1 274.9 166.0 270.1 168.1C265.3 170.3 261.0 173.5 256.6 176.4C252.2 179.4 247.8 182.5 243.7 185.9C239.7 189.3 235.7 192.8 232.2 196.7C228.6 200.6 225.3 204.9 222.4 209.3C219.6 213.8 217.1 218.6 214.9 223.4C212.8 228.2 211.0 233.2 209.6 238.3C208.1 243.4 207.0 248.7 206.2 254.0C205.4 259.3 205.0 264.6 204.7 269.9C204.3 275.2 204.3 280.6 204.2 286.0C204.1 291.3 204.0 296.7 204.2 302.0C204.5 307.4 205.4 315.3 205.7 318.0" stroke="#574b3f" stroke-width="1.8" fill="none" opacity="0.41"/>
<path d="M301.0 160.7C298.4 161.4 290.6 163.2 285.5 164.6C280.4 166.0 275.0 167.0 270.3 169.1C265.5 171.2 261.1 174.3 256.8 177.3C252.4 180.2 248.0 183.3 243.9 186.7C239.9 190.0 235.9 193.5 232.4 197.4C228.8 201.3 225.6 205.5 222.7 209.9C219.8 214.3 217.3 219.1 215.2 223.9C213.0 228.7 211.3 233.6 209.8 238.7C208.4 243.8 207.3 249.1 206.5 254.3C205.6 259.6 205.2 264.8 204.9 270.1C204.5 275.4 204.5 280.8 204.4 286.1C204.3 291.4 204.2 296.8 204.4 302.1C204.7 307.4 205.6 315.3 205.9 318.0" stroke="#938573" stroke-width="1.7" fill="none" opacity="0.69"/>
<path d="M301.0 162.2C298.4 162.9 290.7 164.8 285.6 166.1C280.5 167.5 275.3 168.5 270.5 170.5C265.7 172.6 261.4 175.7 257.1 178.6C252.7 181.5 248.3 184.5 244.3 187.9C240.3 191.2 236.3 194.6 232.8 198.4C229.2 202.2 226.0 206.4 223.1 210.8C220.3 215.2 217.7 219.9 215.6 224.6C213.4 229.4 211.7 234.3 210.2 239.3C208.8 244.4 207.7 249.6 206.9 254.8C206.0 260.0 205.6 265.2 205.2 270.5C204.9 275.8 204.8 281.1 204.8 286.4C204.7 291.6 204.6 296.9 204.8 302.2C205.0 307.5 206.0 315.4 206.2 318.0" stroke="#8d7e6c" stroke-width="1.5" fill="none" opacity="0.47"/>
<path d="M301.0 164.8C298.5 165.5 290.9 167.3 285.8 168.7C280.8 170.1 275.6 171.0 270.9 173.0C266.2 175.0 261.9 178.0 257.5 180.8C253.2 183.6 248.9 186.7 244.9 189.9C240.9 193.1 236.9 196.4 233.4 200.1C229.9 203.9 226.7 208.1 223.8 212.3C221.0 216.6 218.4 221.2 216.2 225.9C214.1 230.6 212.3 235.4 210.9 240.4C209.4 245.3 208.4 250.5 207.5 255.7C206.7 260.8 206.2 265.9 205.8 271.1C205.5 276.3 205.4 281.6 205.4 286.8C205.3 292.0 205.2 297.2 205.4 302.4C205.6 307.6 206.5 315.4 206.8 318.0" stroke="#938573" stroke-width="1.1" fill="none" opacity="0.38"/>
<path d="M301.0 166.4C298.5 167.1 290.9 168.9 286.0 170.3C281.0 171.6 275.8 172.5 271.1 174.5C266.4 176.5 262.2 179.4 257.8 182.2C253.5 184.9 249.3 188.0 245.3 191.1C241.3 194.3 237.3 197.5 233.8 201.2C230.3 204.9 227.1 209.0 224.3 213.3C221.4 217.5 218.8 222.1 216.7 226.7C214.5 231.3 212.8 236.1 211.3 241.0C209.9 245.9 208.8 251.1 207.9 256.2C207.1 261.2 206.6 266.4 206.2 271.5C205.8 276.6 205.8 281.8 205.7 287.0C205.7 292.2 205.5 297.4 205.8 302.5C206.0 307.7 206.9 315.4 207.1 318.0" stroke="#574b3f" stroke-width="1.1" fill="none" opacity="0.60"/>
<path d="M301.0 168.9C298.5 169.6 291.1 171.4 286.2 172.7C281.2 174.1 276.1 175.0 271.5 177.0C266.9 178.9 262.6 181.7 258.3 184.4C254.1 187.1 249.9 190.0 245.9 193.1C241.9 196.2 237.9 199.3 234.4 202.9C230.9 206.5 227.8 210.6 225.0 214.8C222.1 219.0 219.5 223.4 217.3 227.9C215.2 232.5 213.4 237.2 212.0 242.1C210.5 246.9 209.5 252.0 208.6 257.0C207.7 262.0 207.2 267.0 206.8 272.1C206.4 277.2 206.4 282.3 206.3 287.4C206.2 292.5 206.1 297.6 206.4 302.7C206.6 307.8 207.4 315.5 207.6 318.0" stroke="#938573" stroke-width="1.5" fill="none" opacity="0.49"/>
<path d="M301.0 170.9C298.6 171.6 291.2 173.4 286.3 174.7C281.5 176.0 276.4 177.0 271.8 178.9C267.2 180.7 263.0 183.4 258.7 186.1C254.5 188.7 250.3 191.6 246.3 194.7C242.3 197.7 238.3 200.7 234.9 204.2C231.4 207.8 228.3 211.9 225.5 216.0C222.7 220.1 220.0 224.4 217.9 228.9C215.7 233.4 214.0 238.1 212.5 242.9C211.0 247.7 210.0 252.7 209.1 257.6C208.2 262.6 207.6 267.6 207.3 272.6C206.9 277.6 206.8 282.7 206.8 287.7C206.7 292.8 206.6 297.8 206.8 302.9C207.0 307.9 207.8 315.5 208.0 318.0" stroke="#4f4439" stroke-width="2.5" fill="none" opacity="0.47"/>
<path d="M301.0 172.8C298.6 173.4 291.3 175.2 286.5 176.5C281.6 177.8 276.7 178.8 272.1 180.6C267.5 182.5 263.3 185.1 259.1 187.7C254.8 190.2 250.7 193.1 246.8 196.1C242.8 199.1 238.8 202.0 235.3 205.5C231.9 209.0 228.8 213.0 226.0 217.1C223.2 221.1 220.5 225.4 218.3 229.8C216.2 234.3 214.4 238.9 213.0 243.6C211.5 248.4 210.5 253.3 209.6 258.2C208.7 263.1 208.1 268.1 207.7 273.0C207.3 278.0 207.3 283.0 207.2 288.0C207.1 293.0 207.0 298.0 207.3 303.0C207.5 308.0 208.2 315.5 208.4 318.0" stroke="#938573" stroke-width="1.1" fill="none" opacity="0.62"/>
<path d="M301.0 174.0C298.6 174.6 291.3 176.4 286.6 177.7C281.8 179.0 276.8 179.9 272.3 181.8C267.7 183.6 263.5 186.1 259.3 188.7C255.1 191.2 251.0 194.1 247.0 197.0C243.1 200.0 239.0 202.8 235.6 206.3C232.1 209.7 229.2 213.8 226.3 217.8C223.5 221.8 220.8 226.0 218.7 230.4C216.5 234.8 214.8 239.4 213.3 244.1C211.8 248.8 210.8 253.7 209.9 258.6C209.0 263.5 208.4 268.4 208.0 273.3C207.6 278.2 207.5 283.3 207.5 288.2C207.4 293.2 207.3 298.2 207.5 303.1C207.7 308.1 208.5 315.5 208.7 318.0" stroke="#7b6c5c" stroke-width="1.6" fill="none" opacity="0.67"/>
<path d="M301.0 176.5C298.6 177.1 291.5 178.9 286.8 180.2C282.0 181.5 277.2 182.4 272.7 184.2C268.2 186.0 263.9 188.4 259.8 190.8C255.6 193.3 251.5 196.2 247.6 199.0C243.7 201.9 239.6 204.6 236.2 208.0C232.8 211.3 229.8 215.3 227.0 219.3C224.2 223.2 221.5 227.4 219.3 231.7C217.1 236.0 215.4 240.5 214.0 245.1C212.5 249.8 211.4 254.6 210.5 259.4C209.6 264.2 209.0 269.1 208.6 273.9C208.1 278.8 208.1 283.7 208.0 288.6C208.0 293.5 207.9 298.4 208.1 303.3C208.3 308.2 209.0 315.6 209.2 318.0" stroke="#85766a" stroke-width="1.7" fill="none" opacity="0.54"/>
<path d="M301.0 179.0C298.7 179.6 291.6 181.4 287.0 182.7C282.3 184.0 277.5 184.9 273.0 186.6C268.6 188.3 264.4 190.6 260.3 193.0C256.1 195.4 252.1 198.2 248.2 201.0C244.3 203.8 240.2 206.4 236.8 209.7C233.4 213.0 230.5 216.9 227.7 220.8C224.9 224.7 222.2 228.7 220.0 232.9C217.8 237.2 216.1 241.6 214.6 246.2C213.2 250.7 212.1 255.5 211.2 260.3C210.3 265.0 209.6 269.7 209.1 274.5C208.7 279.3 208.7 284.2 208.6 289.0C208.6 293.9 208.5 298.7 208.7 303.5C208.9 308.4 209.6 315.6 209.8 318.0" stroke="#6c5e50" stroke-width="2.4" fill="none" opacity="0.45"/>
<path d="M301.0 180.2C298.7 180.8 291.7 182.6 287.1 183.9C282.4 185.1 277.7 186.1 273.2 187.8C268.8 189.5 264.6 191.7 260.5 194.1C256.4 196.4 252.4 199.2 248.5 201.9C244.6 204.7 240.5 207.2 237.1 210.5C233.7 213.7 230.9 217.7 228.1 221.5C225.3 225.4 222.5 229.3 220.3 233.5C218.1 237.7 216.4 242.2 215.0 246.7C213.5 251.2 212.4 256.0 211.5 260.6C210.6 265.3 209.9 270.1 209.4 274.8C209.0 279.6 209.0 284.4 208.9 289.2C208.8 294.0 208.8 298.8 209.0 303.6C209.2 308.4 209.8 315.6 210.0 318.0" stroke="#8d7e6c" stroke-width="2.1" fill="none" opacity="0.48"/>
<path d="M301.0 181.9C298.7 182.5 291.8 184.3 287.2 185.5C282.6 186.8 277.9 187.7 273.5 189.4C269.1 191.0 264.9 193.2 260.8 195.5C256.7 197.8 252.8 200.6 248.9 203.2C245.0 205.9 240.9 208.4 237.5 211.6C234.1 214.8 231.3 218.7 228.5 222.5C225.7 226.3 222.9 230.2 220.7 234.4C218.6 238.5 216.9 242.9 215.4 247.3C213.9 251.8 212.9 256.5 211.9 261.2C211.0 265.8 210.3 270.5 209.8 275.2C209.4 279.9 209.4 284.7 209.3 289.5C209.2 294.2 209.2 299.0 209.4 303.8C209.6 308.5 210.2 315.6 210.4 318.0" stroke="#574b3f" stroke-width="1.3" fill="none" opacity="0.43"/>
<path d="M301.0 183.8C298.7 184.4 291.9 186.2 287.3 187.4C282.8 188.7 278.1 189.6 273.8 191.2C269.4 192.9 265.3 194.9 261.2 197.2C257.1 199.4 253.2 202.2 249.3 204.8C245.5 207.4 241.4 209.7 238.0 212.9C234.6 216.0 231.8 219.9 229.1 223.6C226.3 227.4 223.4 231.2 221.3 235.3C219.1 239.4 217.4 243.7 215.9 248.1C214.4 252.6 213.4 257.2 212.4 261.8C211.5 266.4 210.7 271.0 210.3 275.7C209.8 280.3 209.8 285.1 209.7 289.8C209.7 294.5 209.7 299.2 209.8 303.9C210.0 308.6 210.6 315.7 210.8 318.0" stroke="#938573" stroke-width="2.3" fill="none" opacity="0.41"/>
<path d="M301.0 185.8C298.8 186.4 292.0 188.2 287.5 189.4C283.0 190.6 278.4 191.6 274.1 193.2C269.8 194.8 265.6 196.7 261.6 198.9C257.5 201.1 253.6 203.8 249.8 206.3C246.0 208.9 241.8 211.2 238.5 214.2C235.1 217.3 232.4 221.2 229.6 224.8C226.8 228.5 224.0 232.3 221.8 236.3C219.6 240.3 217.9 244.6 216.4 249.0C215.0 253.3 213.9 257.9 213.0 262.5C212.0 267.0 211.2 271.6 210.7 276.2C210.3 280.8 210.3 285.5 210.2 290.1C210.1 294.8 210.1 299.4 210.3 304.1C210.5 308.7 211.1 315.7 211.2 318.0" stroke="#85766a" stroke-width="1.7" fill="none" opacity="0.48"/>
<path d="M301.0 188.2C298.8 188.8 292.1 190.6 287.7 191.8C283.3 193.0 278.7 193.9 274.4 195.5C270.2 197.0 266.0 198.8 262.0 201.0C258.0 203.1 254.2 205.7 250.4 208.2C246.5 210.7 242.4 212.8 239.0 215.8C235.7 218.8 233.0 222.7 230.3 226.3C227.5 229.9 224.6 233.6 222.4 237.5C220.2 241.4 218.5 245.6 217.1 249.9C215.6 254.2 214.5 258.8 213.6 263.2C212.6 267.7 211.8 272.2 211.3 276.7C210.8 281.3 210.8 285.9 210.8 290.5C210.7 295.1 210.7 299.7 210.9 304.3C211.0 308.8 211.6 315.7 211.7 318.0" stroke="#85766a" stroke-width="2.1" fill="none" opacity="0.53"/>
<path d="M301.0 190.3C298.8 190.8 292.2 192.6 287.9 193.8C283.5 195.0 279.0 195.9 274.8 197.4C270.5 198.9 266.4 200.6 262.4 202.7C258.4 204.8 254.6 207.4 250.8 209.8C247.0 212.2 242.9 214.2 239.5 217.2C236.2 220.1 233.6 223.9 230.8 227.5C228.1 231.0 225.2 234.6 223.0 238.5C220.8 242.4 219.1 246.5 217.6 250.8C216.1 255.0 215.1 259.5 214.1 263.9C213.1 268.3 212.2 272.7 211.8 277.2C211.3 281.7 211.3 286.3 211.2 290.8C211.2 295.4 211.2 299.9 211.3 304.4C211.5 308.9 212.0 315.7 212.1 318.0" stroke="#4f4439" stroke-width="1.7" fill="none" opacity="0.65"/>
<path d="M301.0 192.7C298.8 193.3 292.4 195.0 288.0 196.2C283.7 197.4 279.3 198.3 275.1 199.8C270.9 201.2 266.8 202.8 262.9 204.8C258.9 206.8 255.2 209.4 251.4 211.7C247.6 214.1 243.5 216.0 240.1 218.8C236.8 221.7 234.2 225.4 231.5 228.9C228.7 232.4 225.8 235.9 223.6 239.7C221.4 243.5 219.7 247.6 218.2 251.8C216.8 255.9 215.7 260.4 214.7 264.7C213.8 269.0 212.8 273.4 212.3 277.8C211.9 282.2 211.9 286.7 211.8 291.2C211.7 295.7 211.7 300.1 211.9 304.6C212.0 309.1 212.5 315.8 212.7 318.0" stroke="#6c5e50" stroke-width="1.6" fill="none" opacity="0.49"/>
<path d="M301.0 193.9C298.9 194.5 292.4 196.2 288.1 197.4C283.9 198.6 279.5 199.5 275.3 200.9C271.1 202.3 267.0 203.9 263.1 205.9C259.2 207.8 255.5 210.4 251.7 212.7C247.9 215.0 243.7 216.8 240.4 219.7C237.1 222.5 234.6 226.2 231.8 229.6C229.1 233.1 226.1 236.5 223.9 240.3C221.7 244.1 220.0 248.1 218.6 252.3C217.1 256.4 216.0 260.8 215.0 265.1C214.1 269.4 213.1 273.7 212.6 278.1C212.1 282.5 212.2 287.0 212.1 291.4C212.0 295.8 212.0 300.3 212.2 304.7C212.3 309.1 212.8 315.8 212.9 318.0" stroke="#6c5e50" stroke-width="1.1" fill="none" opacity="0.37"/>
<path d="M301.0 195.4C298.9 196.0 292.5 197.7 288.3 198.9C284.0 200.0 279.7 201.0 275.5 202.4C271.4 203.8 267.3 205.3 263.4 207.2C259.5 209.1 255.8 211.6 252.0 213.9C248.3 216.1 244.1 217.9 240.8 220.7C237.5 223.5 235.0 227.2 232.2 230.6C229.5 234.0 226.5 237.3 224.3 241.1C222.1 244.8 220.4 248.8 219.0 252.9C217.5 257.0 216.4 261.3 215.4 265.6C214.4 269.8 213.5 274.1 213.0 278.5C212.5 282.8 212.5 287.2 212.4 291.6C212.4 296.0 212.4 300.4 212.5 304.8C212.7 309.2 213.1 315.8 213.2 318.0" stroke="#85766a" stroke-width="1.2" fill="none" opacity="0.56"/>
<path d="M301.0 197.2C298.9 197.8 292.6 199.5 288.4 200.6C284.2 201.8 279.9 202.7 275.8 204.1C271.7 205.4 267.6 206.8 263.7 208.7C259.8 210.6 256.2 213.1 252.4 215.3C248.7 217.4 244.5 219.1 241.2 221.9C237.9 224.6 235.5 228.3 232.7 231.6C230.0 235.0 227.0 238.3 224.8 241.9C222.6 245.6 220.9 249.6 219.4 253.6C218.0 257.6 216.9 261.9 215.9 266.2C214.9 270.4 213.9 274.6 213.4 278.9C212.9 283.2 212.9 287.6 212.8 291.9C212.8 296.3 212.8 300.6 212.9 305.0C213.1 309.3 213.5 315.8 213.6 318.0" stroke="#85766a" stroke-width="1.9" fill="none" opacity="0.68"/>
<path d="M302.0 134.0C305.2 133.4 314.9 130.5 321.3 130.4C327.7 130.3 334.1 131.8 340.3 133.4C346.6 135.0 352.9 137.1 358.8 139.8C364.7 142.5 370.5 146.0 375.7 149.8C381.0 153.6 385.6 158.1 390.1 162.8C394.6 167.5 398.9 172.6 402.7 177.9C406.5 183.2 409.9 188.9 412.8 194.7C415.7 200.5 418.1 206.7 420.1 212.8C422.2 219.0 424.0 225.3 425.1 231.7C426.1 238.2 426.3 244.8 426.5 251.3C426.7 257.9 426.6 264.4 426.3 271.0C426.0 277.5 425.6 284.1 424.9 290.6C424.1 297.1 422.4 306.8 421.9 310.0" stroke="#463c33" stroke-width="2.4" fill="none" opacity="0.56"/>
<path d="M302.0 135.2C305.2 134.6 314.9 131.8 321.2 131.7C327.6 131.6 333.9 133.1 340.1 134.7C346.3 136.3 352.6 138.3 358.5 141.1C364.4 143.8 370.2 147.2 375.4 151.0C380.6 154.8 385.2 159.2 389.7 163.8C394.2 168.4 398.5 173.5 402.2 178.8C406.0 184.1 409.5 189.7 412.4 195.5C415.3 201.2 417.7 207.3 419.7 213.4C421.8 219.6 423.6 225.8 424.7 232.2C425.8 238.6 426.0 245.2 426.2 251.7C426.4 258.2 426.3 264.7 426.1 271.2C425.8 277.7 425.4 284.2 424.7 290.7C424.0 297.1 422.3 306.8 421.8 310.0" stroke="#41372f" stroke-width="2.5" fill="none" opacity="0.56"/>
<path d="M302.0 137.6C305.2 137.1 314.7 134.4 321.0 134.4C327.3 134.3 333.5 135.8 339.7 137.3C345.8 138.9 352.1 140.9 357.9 143.6C363.7 146.3 369.4 149.6 374.6 153.3C379.8 157.0 384.4 161.3 388.9 165.9C393.3 170.4 397.6 175.4 401.4 180.6C405.1 185.8 408.6 191.3 411.5 197.0C414.4 202.6 416.9 208.6 418.9 214.7C421.0 220.7 422.9 226.9 424.0 233.1C425.1 239.4 425.4 245.9 425.6 252.3C425.9 258.8 425.9 265.2 425.7 271.6C425.4 278.1 425.0 284.5 424.3 290.9C423.7 297.3 422.0 306.8 421.5 310.0" stroke="#463c33" stroke-width="2.4" fill="none" opacity="0.70"/>
<path d="M302.0 139.5C305.1 139.0 314.6 136.5 320.8 136.5C327.1 136.5 333.3 137.9 339.4 139.4C345.4 140.9 351.6 143.0 357.4 145.6C363.2 148.2 368.8 151.5 374.0 155.2C379.1 158.8 383.8 163.0 388.2 167.5C392.7 172.0 396.9 176.9 400.7 182.0C404.4 187.1 407.9 192.6 410.8 198.2C413.7 203.8 416.2 209.6 418.3 215.6C420.4 221.6 422.3 227.7 423.4 233.9C424.6 240.1 424.9 246.5 425.2 252.9C425.5 259.2 425.5 265.6 425.3 272.0C425.1 278.3 424.7 284.7 424.1 291.0C423.4 297.4 421.8 306.8 421.3 310.0" stroke="#63574b" stroke-width="1.5" fill="none" opacity="0.40"/>
<path d="M302.0 141.9C305.1 141.5 314.5 139.1 320.6 139.1C326.8 139.1 332.9 140.5 338.9 142.0C345.0 143.5 351.1 145.5 356.8 148.1C362.5 150.6 368.1 153.9 373.2 157.5C378.3 161.0 383.0 165.1 387.4 169.5C391.9 173.9 396.0 178.7 399.8 183.7C403.6 188.8 407.0 194.1 409.9 199.6C412.9 205.1 415.4 210.9 417.5 216.8C419.7 222.6 421.5 228.7 422.7 234.8C423.9 240.9 424.3 247.2 424.7 253.5C425.0 259.8 425.0 266.1 424.9 272.4C424.7 278.7 424.4 285.0 423.7 291.3C423.1 297.5 421.5 306.9 421.1 310.0" stroke="#6d6054" stroke-width="1.4" fill="none" opacity="0.64"/>
<path d="M302.0 143.0C305.1 142.5 314.4 140.2 320.5 140.2C326.7 140.2 332.8 141.6 338.8 143.1C344.8 144.6 350.9 146.6 356.6 149.1C362.2 151.7 367.8 154.9 372.9 158.4C378.0 162.0 382.7 166.0 387.1 170.3C391.5 174.7 395.7 179.5 399.4 184.5C403.2 189.5 406.6 194.8 409.6 200.3C412.5 205.7 415.0 211.5 417.2 217.3C419.3 223.1 421.2 229.1 422.4 235.2C423.6 241.3 424.1 247.6 424.4 253.8C424.8 260.0 424.9 266.3 424.7 272.6C424.6 278.8 424.2 285.1 423.6 291.3C423.0 297.6 421.4 306.9 420.9 310.0" stroke="#463c33" stroke-width="1.3" fill="none" opacity="0.68"/>
<path d="M302.0 145.2C305.1 144.8 314.3 142.6 320.3 142.7C326.4 142.7 332.4 144.1 338.4 145.5C344.3 147.0 350.4 148.9 356.0 151.5C361.6 154.0 367.2 157.1 372.2 160.6C377.3 164.1 381.9 168.0 386.3 172.2C390.7 176.5 394.9 181.2 398.6 186.1C402.4 191.0 405.8 196.3 408.8 201.7C411.7 207.0 414.3 212.7 416.4 218.4C418.6 224.1 420.5 230.1 421.8 236.1C423.0 242.1 423.5 248.2 423.9 254.4C424.4 260.6 424.4 266.8 424.3 273.0C424.2 279.2 423.9 285.4 423.3 291.5C422.7 297.7 421.1 306.9 420.7 310.0" stroke="#6d6054" stroke-width="1.9" fill="none" opacity="0.36"/>
<path d="M302.0 147.4C305.0 147.0 314.1 145.0 320.1 145.1C326.1 145.1 332.1 146.5 338.0 147.9C343.9 149.4 349.9 151.3 355.4 153.7C361.0 156.2 366.5 159.3 371.5 162.7C376.5 166.1 381.2 169.9 385.6 174.1C390.0 178.3 394.1 182.9 397.8 187.8C401.5 192.6 405.0 197.7 408.0 203.0C410.9 208.3 413.5 213.8 415.7 219.5C417.9 225.1 419.8 231.0 421.1 236.9C422.4 242.8 423.0 248.9 423.4 255.0C423.9 261.1 424.0 267.2 423.9 273.4C423.8 279.5 423.5 285.6 423.0 291.7C422.4 297.8 420.9 307.0 420.5 310.0" stroke="#6d6054" stroke-width="2.4" fill="none" opacity="0.59"/>
<path d="M302.0 148.9C305.0 148.6 314.1 146.6 320.0 146.7C326.0 146.8 331.9 148.1 337.8 149.6C343.6 151.0 349.5 152.9 355.1 155.3C360.6 157.8 366.0 160.9 371.0 164.2C376.0 167.5 380.7 171.3 385.1 175.4C389.4 179.5 393.5 184.1 397.3 188.9C401.0 193.6 404.4 198.7 407.4 204.0C410.4 209.2 413.0 214.6 415.2 220.2C417.4 225.8 419.4 231.6 420.7 237.5C422.0 243.4 422.6 249.4 423.1 255.4C423.6 261.4 423.7 267.6 423.7 273.6C423.6 279.7 423.3 285.8 422.7 291.9C422.2 297.9 420.7 307.0 420.3 310.0" stroke="#41372f" stroke-width="2.5" fill="none" opacity="0.47"/>
<path d="M302.0 150.8C305.0 150.5 313.9 148.6 319.8 148.8C325.8 148.9 331.6 150.2 337.4 151.6C343.2 153.0 349.1 154.9 354.6 157.3C360.1 159.7 365.5 162.7 370.5 166.0C375.4 169.3 380.1 172.9 384.4 177.0C388.8 181.0 392.9 185.6 396.6 190.3C400.3 194.9 403.7 200.0 406.7 205.1C409.7 210.3 412.4 215.6 414.6 221.2C416.8 226.7 418.8 232.4 420.1 238.2C421.5 244.0 422.1 250.0 422.7 255.9C423.2 261.9 423.4 268.0 423.3 274.0C423.3 280.0 423.0 286.0 422.5 292.0C421.9 298.0 420.5 307.0 420.1 310.0" stroke="#4a3f35" stroke-width="2.2" fill="none" opacity="0.47"/>
<path d="M302.0 152.8C304.9 152.4 313.8 150.7 319.7 150.9C325.5 151.0 331.4 152.3 337.1 153.7C342.8 155.1 348.6 156.9 354.1 159.3C359.6 161.6 364.9 164.7 369.8 167.9C374.8 171.1 379.4 174.6 383.8 178.6C388.1 182.6 392.2 187.1 395.9 191.7C399.6 196.3 403.0 201.3 406.0 206.3C409.0 211.4 411.7 216.7 414.0 222.1C416.2 227.5 418.2 233.2 419.5 239.0C420.9 244.7 421.7 250.6 422.2 256.4C422.8 262.3 423.0 268.4 423.0 274.3C423.0 280.3 422.7 286.2 422.2 292.2C421.7 298.1 420.3 307.0 419.9 310.0" stroke="#3f362e" stroke-width="2.3" fill="none" opacity="0.62"/>
<path d="M302.0 154.7C304.9 154.4 313.7 152.8 319.5 153.0C325.3 153.1 331.1 154.4 336.8 155.8C342.5 157.1 348.2 158.9 353.6 161.2C359.0 163.6 364.3 166.5 369.2 169.7C374.2 172.9 378.8 176.3 383.1 180.2C387.5 184.1 391.5 188.5 395.2 193.1C398.9 197.6 402.3 202.5 405.3 207.5C408.4 212.5 411.1 217.7 413.3 223.0C415.6 228.4 417.6 234.0 419.0 239.7C420.4 245.3 421.2 251.1 421.8 257.0C422.4 262.8 422.6 268.8 422.6 274.7C422.7 280.6 422.4 286.5 421.9 292.4C421.4 298.2 420.1 307.1 419.7 310.0" stroke="#4c4238" stroke-width="2.3" fill="none" opacity="0.61"/>
<path d="M302.0 156.6C304.9 156.4 313.6 154.9 319.3 155.1C325.1 155.3 330.8 156.5 336.4 157.9C342.1 159.3 347.8 161.0 353.1 163.3C358.5 165.6 363.7 168.5 368.6 171.6C373.5 174.7 378.2 178.0 382.5 181.9C386.8 185.7 390.8 190.0 394.5 194.5C398.2 199.0 401.6 203.8 404.6 208.7C407.7 213.7 410.4 218.7 412.7 224.0C415.0 229.3 417.0 234.9 418.4 240.4C419.9 246.0 420.7 251.7 421.4 257.5C422.0 263.3 422.2 269.2 422.3 275.0C422.3 280.8 422.1 286.7 421.6 292.5C421.2 298.4 419.9 307.1 419.5 310.0" stroke="#4a3f35" stroke-width="1.8" fill="none" opacity="0.61"/>
<path d="M302.0 159.8C304.8 159.6 313.4 158.3 319.1 158.5C324.7 158.8 330.4 159.9 335.9 161.3C341.5 162.6 347.1 164.3 352.3 166.6C357.6 168.8 362.8 171.6 367.6 174.6C372.5 177.6 377.1 180.8 381.4 184.5C385.7 188.2 389.7 192.5 393.3 196.8C397.0 201.2 400.4 205.9 403.5 210.7C406.5 215.5 409.3 220.4 411.7 225.6C414.0 230.7 416.0 236.2 417.5 241.6C419.0 247.1 420.0 252.7 420.7 258.4C421.4 264.0 421.7 269.8 421.7 275.6C421.8 281.3 421.6 287.1 421.2 292.8C420.8 298.5 419.5 307.1 419.2 310.0" stroke="#3f362e" stroke-width="1.4" fill="none" opacity="0.44"/>
<path d="M302.0 161.3C304.8 161.1 313.3 159.9 318.9 160.2C324.5 160.4 330.2 161.6 335.7 162.9C341.2 164.2 346.7 165.9 352.0 168.1C357.2 170.3 362.4 173.1 367.2 176.0C372.0 179.0 376.6 182.1 380.9 185.7C385.2 189.4 389.1 193.6 392.8 197.9C396.5 202.2 399.9 206.9 403.0 211.6C406.0 216.3 408.8 221.2 411.2 226.3C413.5 231.4 415.5 236.8 417.0 242.2C418.6 247.6 419.6 253.2 420.3 258.8C421.1 264.4 421.4 270.1 421.5 275.8C421.6 281.5 421.4 287.2 421.0 292.9C420.6 298.6 419.3 307.2 419.0 310.0" stroke="#41372f" stroke-width="1.7" fill="none" opacity="0.68"/>
<path d="M302.0 163.7C304.8 163.5 313.2 162.5 318.7 162.8C324.3 163.1 329.8 164.2 335.3 165.5C340.7 166.8 346.2 168.4 351.4 170.6C356.6 172.7 361.6 175.5 366.4 178.3C371.2 181.2 375.9 184.2 380.1 187.8C384.4 191.3 388.3 195.4 391.9 199.7C395.6 203.9 399.0 208.4 402.1 213.1C405.2 217.7 408.0 222.5 410.4 227.5C412.8 232.5 414.8 237.8 416.3 243.1C417.9 248.5 419.0 253.9 419.8 259.4C420.6 264.9 420.9 270.6 421.1 276.2C421.2 281.9 421.0 287.5 420.6 293.1C420.3 298.8 419.1 307.2 418.7 310.0" stroke="#41372f" stroke-width="1.1" fill="none" opacity="0.39"/>
<path d="M302.0 164.8C304.8 164.7 313.1 163.7 318.6 164.0C324.1 164.3 329.7 165.4 335.1 166.7C340.5 168.0 345.9 169.6 351.1 171.8C356.3 173.9 361.3 176.6 366.1 179.4C370.8 182.3 375.5 185.2 379.7 188.7C384.0 192.2 387.9 196.3 391.5 200.5C395.2 204.7 398.6 209.2 401.7 213.8C404.8 218.4 407.6 223.1 410.0 228.0C412.4 233.0 414.4 238.3 416.0 243.6C417.6 248.9 418.7 254.2 419.5 259.7C420.4 265.2 420.7 270.9 420.9 276.4C421.0 282.0 420.9 287.6 420.5 293.2C420.1 298.8 418.9 307.2 418.6 310.0" stroke="#41372f" stroke-width="1.3" fill="none" opacity="0.57"/>
<path d="M302.0 167.4C304.7 167.3 313.0 166.5 318.4 166.9C323.8 167.2 329.3 168.3 334.6 169.5C340.0 170.8 345.3 172.4 350.4 174.5C355.5 176.5 360.5 179.2 365.3 182.0C370.0 184.7 374.6 187.5 378.8 190.9C383.1 194.3 386.9 198.3 390.6 202.4C394.2 206.5 397.6 210.9 400.7 215.4C403.8 219.9 406.7 224.5 409.1 229.3C411.6 234.2 413.6 239.4 415.2 244.6C416.9 249.8 418.1 255.0 419.0 260.4C419.8 265.8 420.2 271.4 420.4 276.9C420.6 282.4 420.5 287.9 420.1 293.5C419.8 299.0 418.6 307.2 418.4 310.0" stroke="#3f362e" stroke-width="1.0" fill="none" opacity="0.67"/>
<path d="M302.0 168.5C304.7 168.4 312.9 167.7 318.3 168.0C323.7 168.4 329.1 169.4 334.4 170.7C339.7 171.9 345.1 173.5 350.2 175.6C355.2 177.6 360.2 180.3 364.9 183.0C369.6 185.7 374.3 188.4 378.5 191.8C382.7 195.2 386.5 199.2 390.2 203.2C393.8 207.2 397.3 211.6 400.4 216.1C403.5 220.5 406.4 225.0 408.8 229.9C411.2 234.7 413.3 239.8 414.9 245.0C416.6 250.1 417.8 255.4 418.7 260.7C419.6 266.1 420.0 271.6 420.2 277.1C420.4 282.6 420.3 288.1 420.0 293.6C419.6 299.0 418.5 307.3 418.2 310.0" stroke="#6d6054" stroke-width="1.1" fill="none" opacity="0.58"/>
<path d="M302.0 171.3C304.7 171.3 312.7 170.7 318.1 171.1C323.4 171.5 328.7 172.5 334.0 173.7C339.2 175.0 344.4 176.5 349.5 178.5C354.5 180.5 359.4 183.1 364.0 185.7C368.7 188.3 373.3 190.9 377.5 194.2C381.7 197.4 385.5 201.3 389.2 205.3C392.8 209.2 396.2 213.5 399.3 217.8C402.4 222.1 405.4 226.5 407.9 231.2C410.3 236.0 412.4 241.0 414.1 246.1C415.8 251.1 417.1 256.2 418.1 261.5C419.0 266.7 419.5 272.2 419.7 277.6C419.9 283.0 419.9 288.4 419.6 293.8C419.3 299.2 418.2 307.3 417.9 310.0" stroke="#3f362e" stroke-width="2.1" fill="none" opacity="0.42"/>
<path d="M302.0 173.2C304.6 173.2 312.6 172.8 317.9 173.2C323.2 173.6 328.4 174.6 333.6 175.8C338.8 177.0 344.0 178.5 349.0 180.5C353.9 182.4 358.8 185.0 363.4 187.5C368.1 190.1 372.7 192.6 376.9 195.8C381.1 199.0 384.9 202.8 388.5 206.7C392.1 210.5 395.5 214.7 398.6 219.0C401.8 223.2 404.8 227.5 407.2 232.2C409.7 236.8 411.8 241.8 413.5 246.8C415.3 251.8 416.7 256.8 417.7 262.0C418.6 267.2 419.1 272.6 419.4 277.9C419.6 283.3 419.6 288.6 419.3 294.0C419.0 299.3 418.0 307.3 417.7 310.0" stroke="#63574b" stroke-width="2.3" fill="none" opacity="0.47"/>
<path d="M302.0 175.0C304.6 175.0 312.5 174.7 317.7 175.2C322.9 175.6 328.2 176.6 333.3 177.7C338.5 178.9 343.6 180.4 348.5 182.3C353.5 184.3 358.2 186.8 362.9 189.3C367.5 191.8 372.1 194.2 376.3 197.3C380.4 200.4 384.2 204.2 387.8 208.0C391.4 211.8 394.9 215.9 398.0 220.1C401.1 224.3 404.1 228.5 406.6 233.1C409.1 237.6 411.2 242.6 413.0 247.5C414.8 252.4 416.2 257.4 417.3 262.5C418.3 267.6 418.7 273.0 419.0 278.3C419.3 283.5 419.3 288.8 419.0 294.1C418.8 299.4 417.8 307.4 417.5 310.0" stroke="#6d6054" stroke-width="1.6" fill="none" opacity="0.49"/>
<path d="M302.0 177.2C304.6 177.2 312.4 177.0 317.5 177.5C322.7 178.0 327.9 178.9 333.0 180.1C338.0 181.3 343.1 182.7 348.0 184.6C352.9 186.5 357.6 188.9 362.2 191.4C366.8 193.8 371.4 196.1 375.5 199.1C379.7 202.2 383.4 205.9 387.0 209.6C390.7 213.3 394.1 217.3 397.2 221.4C400.4 225.5 403.4 229.7 405.9 234.1C408.5 238.6 410.6 243.5 412.4 248.3C414.2 253.1 415.7 258.0 416.8 263.1C417.8 268.1 418.3 273.4 418.7 278.6C419.0 283.8 419.0 289.1 418.7 294.3C418.5 299.5 417.6 307.4 417.3 310.0" stroke="#6d6054" stroke-width="1.3" fill="none" opacity="0.70"/>
<path d="M302.0 177.7C304.6 177.8 312.3 177.6 317.5 178.1C322.6 178.6 327.8 179.5 332.9 180.6C337.9 181.8 343.0 183.3 347.9 185.1C352.7 187.0 357.4 189.4 362.0 191.8C366.6 194.3 371.2 196.5 375.4 199.6C379.5 202.6 383.3 206.3 386.9 210.0C390.5 213.7 393.9 217.7 397.0 221.8C400.2 225.8 403.2 229.9 405.8 234.4C408.3 238.9 410.4 243.7 412.2 248.5C414.0 253.3 415.6 258.2 416.6 263.2C417.7 268.3 418.2 273.5 418.6 278.7C418.9 283.9 418.9 289.1 418.7 294.3C418.4 299.6 417.5 307.4 417.3 310.0" stroke="#4a3f35" stroke-width="2.4" fill="none" opacity="0.63"/>
<path d="M302.0 179.8C304.6 179.9 312.2 179.9 317.3 180.4C322.4 180.9 327.5 181.8 332.5 182.9C337.5 184.1 342.5 185.5 347.3 187.3C352.1 189.2 356.8 191.6 361.4 193.9C365.9 196.2 370.5 198.4 374.7 201.3C378.8 204.3 382.5 207.9 386.1 211.5C389.7 215.1 393.1 219.1 396.3 223.1C399.4 227.1 402.5 231.1 405.1 235.4C407.6 239.8 409.7 244.6 411.6 249.3C413.4 254.1 415.1 258.8 416.2 263.8C417.3 268.8 417.8 274.0 418.2 279.1C418.6 284.2 418.5 289.4 418.4 294.5C418.2 299.7 417.3 307.4 417.0 310.0" stroke="#3f362e" stroke-width="2.0" fill="none" opacity="0.52"/>
<path d="M302.0 183.0C304.5 183.1 312.0 183.3 317.0 183.9C322.0 184.4 327.0 185.2 332.0 186.4C336.9 187.5 341.8 188.8 346.5 190.6C351.3 192.4 355.9 194.7 360.4 196.9C364.9 199.2 369.5 201.2 373.6 204.0C377.7 206.8 381.4 210.3 384.9 213.8C388.5 217.3 391.9 221.2 395.1 225.0C398.3 228.9 401.4 232.7 404.0 237.0C406.6 241.3 408.7 245.9 410.7 250.6C412.6 255.2 414.3 259.8 415.5 264.7C416.6 269.5 417.2 274.6 417.6 279.7C418.0 284.7 418.1 289.8 417.9 294.8C417.7 299.9 416.9 307.5 416.7 310.0" stroke="#4c4238" stroke-width="1.9" fill="none" opacity="0.40"/>
<path d="M302.0 183.5C304.5 183.6 312.0 183.8 317.0 184.4C322.0 185.0 327.0 185.8 331.9 186.9C336.8 188.0 341.7 189.4 346.4 191.1C351.1 192.9 355.7 195.2 360.2 197.4C364.7 199.6 369.3 201.6 373.4 204.4C377.5 207.2 381.2 210.7 384.8 214.2C388.3 217.7 391.7 221.5 394.9 225.3C398.1 229.2 401.3 233.0 403.9 237.3C406.5 241.5 408.6 246.2 410.5 250.7C412.4 255.3 414.2 260.0 415.3 264.8C416.5 269.6 417.1 274.8 417.5 279.8C418.0 284.8 418.0 289.8 417.8 294.9C417.7 299.9 416.8 307.5 416.6 310.0" stroke="#6d6054" stroke-width="2.0" fill="none" opacity="0.53"/>
<path d="M302.0 186.9C304.4 187.1 311.8 187.5 316.7 188.1C321.6 188.7 326.5 189.5 331.3 190.6C336.1 191.6 340.9 192.9 345.6 194.6C350.2 196.3 354.7 198.6 359.2 200.7C363.6 202.8 368.2 204.6 372.3 207.3C376.3 209.9 380.0 213.3 383.5 216.7C387.1 220.0 390.5 223.7 393.7 227.4C396.9 231.1 400.1 234.8 402.8 238.9C405.4 243.0 407.5 247.6 409.5 252.0C411.5 256.5 413.4 261.0 414.6 265.7C415.8 270.4 416.5 275.5 417.0 280.4C417.4 285.3 417.5 290.2 417.4 295.1C417.2 300.1 416.5 307.5 416.3 310.0" stroke="#63574b" stroke-width="2.6" fill="none" opacity="0.42"/>
<path d="M302.0 188.7C304.4 188.9 311.7 189.5 316.5 190.1C321.4 190.8 326.2 191.5 331.0 192.6C335.8 193.6 340.5 194.9 345.1 196.5C349.7 198.2 354.2 200.4 358.6 202.4C363.0 204.5 367.6 206.2 371.7 208.8C375.7 211.4 379.3 214.7 382.9 218.0C386.4 221.3 389.8 224.9 393.0 228.6C396.3 232.2 399.5 235.8 402.1 239.8C404.8 243.9 407.0 248.4 409.0 252.7C411.0 257.1 412.9 261.6 414.2 266.2C415.5 270.9 416.1 275.8 416.6 280.7C417.1 285.5 417.2 290.4 417.1 295.3C417.0 300.2 416.3 307.6 416.1 310.0" stroke="#463c33" stroke-width="1.4" fill="none" opacity="0.45"/>
<path d="M302.0 189.7C304.4 189.9 311.6 190.5 316.4 191.2C321.2 191.8 326.1 192.5 330.8 193.6C335.6 194.7 340.3 195.9 344.9 197.5C349.4 199.2 353.9 201.4 358.3 203.4C362.7 205.4 367.3 207.1 371.3 209.6C375.4 212.2 379.0 215.5 382.5 218.7C386.1 222.0 389.5 225.6 392.7 229.2C395.9 232.8 399.2 236.3 401.8 240.3C404.5 244.3 406.7 248.8 408.7 253.1C410.7 257.5 412.7 261.8 414.0 266.5C415.3 271.1 416.0 276.0 416.5 280.9C417.0 285.7 417.0 290.5 417.0 295.4C416.9 300.2 416.2 307.6 416.0 310.0" stroke="#4a3f35" stroke-width="1.5" fill="none" opacity="0.54"/>
<path d="M302.0 192.5C304.4 192.8 311.5 193.6 316.2 194.3C320.9 195.0 325.7 195.6 330.3 196.7C335.0 197.7 339.6 198.9 344.1 200.5C348.7 202.1 353.0 204.2 357.4 206.1C361.8 208.0 366.4 209.6 370.4 212.0C374.4 214.5 377.9 217.7 381.5 220.8C385.0 224.0 388.4 227.5 391.7 230.9C394.9 234.4 398.2 237.8 400.9 241.7C403.6 245.6 405.8 250.0 407.8 254.2C409.9 258.5 412.0 262.7 413.3 267.2C414.7 271.8 415.4 276.6 415.9 281.4C416.5 286.1 416.6 290.9 416.5 295.6C416.5 300.4 415.8 307.6 415.7 310.0" stroke="#463c33" stroke-width="2.5" fill="none" opacity="0.47"/>
<path d="M302.0 193.9C304.3 194.2 311.4 195.0 316.1 195.8C320.8 196.5 325.5 197.1 330.1 198.1C334.7 199.2 339.3 200.4 343.8 201.9C348.3 203.5 352.6 205.5 357.0 207.4C361.3 209.3 365.9 210.8 369.9 213.2C373.9 215.6 377.5 218.7 381.0 221.8C384.5 224.9 387.9 228.3 391.2 231.8C394.4 235.2 397.7 238.5 400.4 242.4C403.2 246.2 405.4 250.5 407.4 254.7C409.5 258.9 411.6 263.1 413.0 267.6C414.4 272.1 415.2 276.9 415.7 281.6C416.3 286.3 416.4 291.0 416.4 295.8C416.3 300.5 415.7 307.6 415.5 310.0" stroke="#4a3f35" stroke-width="2.3" fill="none" opacity="0.53"/>
<path d="M302.0 196.4C304.3 196.8 311.2 197.8 315.8 198.5C320.5 199.2 325.1 199.9 329.7 200.9C334.2 201.9 338.8 203.0 343.2 204.5C347.6 206.0 351.9 208.0 356.2 209.8C360.5 211.6 365.1 213.0 369.1 215.3C373.1 217.6 376.6 220.7 380.1 223.7C383.6 226.7 387.0 230.0 390.3 233.3C393.5 236.7 396.9 239.9 399.6 243.6C402.4 247.3 404.6 251.6 406.7 255.7C408.8 259.8 411.0 263.9 412.5 268.3C413.9 272.7 414.7 277.4 415.3 282.1C415.9 286.7 416.0 291.3 416.0 296.0C416.0 300.6 415.4 307.7 415.3 310.0" stroke="#4a3f35" stroke-width="1.2" fill="none" opacity="0.40"/>
<path d="M302.0 197.9C304.3 198.2 311.1 199.3 315.7 200.1C320.3 200.8 324.9 201.4 329.4 202.4C334.0 203.4 338.4 204.6 342.8 206.0C347.2 207.5 351.4 209.5 355.7 211.2C360.0 213.0 364.6 214.3 368.6 216.5C372.5 218.8 376.0 221.8 379.6 224.7C383.1 227.7 386.5 231.0 389.7 234.2C393.0 237.5 396.4 240.7 399.1 244.3C401.9 248.0 404.1 252.2 406.3 256.3C408.4 260.3 410.7 264.4 412.1 268.7C413.6 273.0 414.4 277.7 415.0 282.3C415.6 286.9 415.8 291.5 415.8 296.1C415.8 300.7 415.2 307.7 415.1 310.0" stroke="#3f362e" stroke-width="1.7" fill="none" opacity="0.41"/>
<path d="M303.4 132.0C302.8 134.7 300.5 143.1 299.6 148.3C298.7 153.6 297.7 158.4 297.8 163.5C297.9 168.6 299.2 172.8 300.4 178.6C301.6 184.3 304.2 194.8 305.0 198.0" stroke="#a39580" stroke-width="2.6" fill="none" opacity="0.7" filter="url(#b1)"/>
<path d="M199 300C196 240 214 180 268 141" stroke="#8f8170" stroke-width="8" fill="none" opacity="0.45" filter="url(#b2)"/>
<path d="M337 207C372 219 400 242 414 285" stroke="#3b322a" stroke-width="9" fill="none" opacity="0.4" filter="url(#b4)"/>
<path d="M268 210C240 226 222 250 215 290" stroke="#463c32" stroke-width="7" fill="none" opacity="0.3" filter="url(#b4)"/>
<path d="M206 268C203 290 205 306 209 322" stroke="#b0aaa2" stroke-width="9" fill="none" opacity="0.6" filter="url(#b2)"/>
<path d="M421 270C423 288 421 300 416 312" stroke="#a39c93" stroke-width="7" fill="none" opacity="0.5" filter="url(#b2)"/>
</g>
<path d="M215.0 300.0C212.8 296.0 208.1 296.5 205.0 296.0C201.9 295.5 198.7 295.0 196.5 297.0C194.3 299.0 192.6 303.5 192.0 308.0C191.4 312.5 191.7 318.7 193.0 324.0C194.3 329.3 197.4 334.7 199.6 340.0C201.8 345.3 203.6 351.2 206.0 356.0C208.4 360.8 211.8 369.2 213.8 368.5C215.8 367.8 217.3 360.1 218.0 352.0C218.7 343.9 218.5 328.7 218.0 320.0C217.5 311.3 217.2 304.0 215.0 300.0Z" fill="#e4b299"/>
<path d="M412.0 292.0C413.8 287.0 418.7 286.3 422.0 285.0C425.3 283.7 428.8 282.5 431.7 284.0C434.6 285.5 438.4 289.4 439.5 294.0C440.6 298.6 439.1 305.7 438.0 311.5C436.9 317.3 434.8 322.9 433.0 329.0C431.2 335.1 429.2 342.8 427.0 348.0C424.8 353.2 422.2 357.2 420.0 360.0C417.8 362.8 415.5 366.2 414.0 364.5C412.5 362.8 411.5 358.2 411.0 350.0C410.5 341.8 410.8 324.7 411.0 315.0C411.2 305.3 410.2 297.0 412.0 292.0Z" fill="#e6b59c"/>
<path d="M200 306C198 322 202 340 208 354" stroke="#c07c63" stroke-width="4" fill="none" opacity="0.75" filter="url(#b1)"/>
<path d="M432 296C434 312 430 334 422 350" stroke="#c07c63" stroke-width="4" fill="none" opacity="0.75" filter="url(#b1)"/>
<circle cx="418.8" cy="355" r="3.2" fill="#f1eeea"/><circle cx="418.8" cy="355" r="3.2" fill="none" stroke="#b9b2a8" stroke-width="0.7"/><circle cx="418" cy="354" r="1.1" fill="#fff"/>
<circle cx="207" cy="365" r="1.6" fill="#e8e4de"/>
<path d="M197 240L216 240L217 330L215 352L210 344L205 318L200 296Z" fill="url(#gGL)" filter="url(#b1)"/>
<path d="M207 300L215 300L216 350L212 340Z" fill="#cbc4bc" opacity="0.7" filter="url(#b1)"/>
<path d="M404 245L428 245L424 290L418 303L413 306Z" fill="url(#gGR)" filter="url(#b1)"/>
<path d="M215.0 298.0C215.0 290.2 213.8 283.5 215.0 275.0C216.2 266.5 217.8 255.5 222.0 247.0C226.2 238.5 232.3 230.5 240.0 224.0C247.7 217.5 257.8 212.2 268.0 208.0C278.2 203.8 289.5 199.5 301.0 199.0C312.5 198.5 325.2 201.7 337.0 205.0C348.8 208.3 362.0 212.8 372.0 219.0C382.0 225.2 390.6 234.3 397.0 242.0C403.4 249.7 407.5 257.3 410.5 265.0C413.5 272.7 414.3 278.5 415.0 288.0C415.7 297.5 414.8 311.0 414.5 322.0C414.2 333.0 414.9 342.3 413.0 354.0C411.1 365.7 406.8 381.0 403.0 392.0C399.2 403.0 395.2 411.3 390.0 420.0C384.8 428.7 379.5 436.7 372.0 444.0C364.5 451.3 354.5 459.3 345.0 464.0C335.5 468.7 325.0 471.7 315.0 472.0C305.0 472.3 294.5 470.3 285.0 466.0C275.5 461.7 265.7 454.0 258.0 446.0C250.3 438.0 243.8 425.7 239.0 418.0C234.2 410.3 232.0 406.5 229.0 400.0C226.0 393.5 223.1 387.3 221.0 379.0C218.9 370.7 217.5 359.5 216.5 350.0C215.5 340.5 215.2 330.7 215.0 322.0C214.8 313.3 215.0 305.8 215.0 298.0Z" fill="url(#gFace)"/>
<g clip-path="url(#cFace)">
<path d="M213.0 298.0C213.2 294.2 212.5 283.5 214.0 275.0C215.5 266.5 217.7 255.5 222.0 247.0C226.3 238.5 232.3 230.5 240.0 224.0C247.7 217.5 257.8 212.2 268.0 208.0C278.2 203.8 289.5 199.5 301.0 199.0C312.5 198.5 325.2 201.7 337.0 205.0C348.8 208.3 362.0 212.8 372.0 219.0C382.0 225.2 390.5 234.3 397.0 242.0C403.5 249.7 407.8 257.3 411.0 265.0C414.2 272.7 415.2 284.2 416.0 288.0" stroke="#9c8773" stroke-width="11" fill="none" opacity="0.6" filter="url(#b4)"/>
<path d="M211 270C208 290 212 306 216 322" stroke="#9a9288" stroke-width="8" fill="none" opacity="0.6" filter="url(#b2)"/>
<path d="M415 262C420 280 418 296 414 310" stroke="#8f857a" stroke-width="8" fill="none" opacity="0.55" filter="url(#b2)"/>
<path d="M212 320C214 370 232 420 262 452" stroke="#d8a68e" stroke-width="12" fill="none" opacity="0.4" filter="url(#b4)"/>
<path d="M416 320C414 370 398 412 366 450" stroke="#d8a68e" stroke-width="12" fill="none" opacity="0.4" filter="url(#b4)"/>
<ellipse cx="246" cy="372" rx="22" ry="20" fill="#ecbfac" opacity="0.45" filter="url(#b8)"/>
<ellipse cx="382" cy="366" rx="22" ry="20" fill="#ecbfac" opacity="0.45" filter="url(#b8)"/>
<ellipse cx="264" cy="313" rx="30" ry="13" fill="#d8a78f" opacity="0.55" filter="url(#b4)"/>
<ellipse cx="356" cy="308" rx="30" ry="13" fill="#d8a78f" opacity="0.55" filter="url(#b4)"/>
<path d="M297 322C293 345 286 358 283 368C284 380 296 385 312 385C328 385 338 380 339 366C335 354 328 342 326 318" fill="#e4bba5" opacity="0.5" filter="url(#b4)"/>
<path d="M310 318C309 340 309 352 311 364" stroke="#fbf0e7" stroke-width="7" fill="none" opacity="0.85" filter="url(#b4)"/>
<ellipse cx="313" cy="366" rx="7" ry="5" fill="#fbeee4" opacity="0.8" filter="url(#b2)"/>
<path d="M284 364C281 370 283 377 290 379" stroke="#c48c76" stroke-width="2.2" fill="none" opacity="0.7" filter="url(#b1)"/>
<path d="M339 361C343 367 341 375 334 377" stroke="#c48c76" stroke-width="2.2" fill="none" opacity="0.7" filter="url(#b1)"/>
<path d="M288 377C293 381 300 380 304 379C308 384 317 384 321 379C326 381 332 380 336 376" stroke="#b27a65" stroke-width="2.4" fill="none" opacity="0.7" filter="url(#b1)"/>
<ellipse cx="297" cy="376.5" rx="5" ry="2.4" fill="#6f4335" opacity="0.75" filter="url(#b1)"/>
<ellipse cx="324.5" cy="375.5" rx="5" ry="2.4" fill="#6f4335" opacity="0.75" filter="url(#b1)"/>
<ellipse cx="312" cy="388" rx="12" ry="3" fill="#d9ab95" opacity="0.5" filter="url(#b2)"/>
<path d="M276 378C266 392 262 402 264 414" stroke="#cf9a83" stroke-width="4" fill="none" opacity="0.6" filter="url(#b2)"/>
<path d="M346 374C358 386 364 396 364 408" stroke="#cf9a83" stroke-width="4" fill="none" opacity="0.6" filter="url(#b2)"/>
<ellipse cx="314" cy="452" rx="26" ry="9" fill="#f8e9de" opacity="0.7" filter="url(#b4)"/>
<path d="M262 452C285 470 345 472 370 448L372 480L256 480Z" fill="#dcb09a" opacity="0.4" filter="url(#b4)"/>
</g>
<path d="M254.0 444.0C256.9 446.6 264.9 454.9 271.5 459.3C278.1 463.7 286.1 468.0 293.3 470.2C300.6 472.4 307.7 472.9 315.0 472.4C322.3 471.9 329.7 470.6 337.0 467.0C344.3 463.4 351.5 456.6 358.8 450.6C366.1 444.6 377.0 434.3 380.6 431.0" stroke="#d2a58e" stroke-width="1.6" fill="none" opacity="0.6" filter="url(#b1)"/>
<path d="M229.0 303.0C229.0 302.2 234.8 296.6 239.0 294.5C243.2 292.4 248.7 290.8 254.0 290.5C259.3 290.2 265.0 291.8 271.0 293.0C277.0 294.2 286.8 296.3 290.0 298.0C293.2 299.7 293.2 302.7 290.0 303.0C286.8 303.3 277.0 300.9 271.0 300.0C265.0 299.1 259.3 297.6 254.0 297.5C248.7 297.4 243.2 298.6 239.0 299.5C234.8 300.4 229.0 303.8 229.0 303.0Z" fill="#3a2c26" opacity="0.9" filter="url(#b05)"/>
<path d="M323.0 300.0C324.9 298.3 332.2 294.1 337.0 292.0C341.8 289.9 347.2 288.8 352.0 287.5C356.8 286.2 361.0 284.4 366.0 284.5C371.0 284.6 377.6 285.7 382.0 288.0C386.4 290.3 392.5 297.5 392.5 298.5C392.5 299.5 386.4 295.0 382.0 294.0C377.6 293.0 372.5 291.9 366.0 292.5C359.5 293.1 349.8 295.9 343.0 297.5C336.2 299.1 328.8 301.6 325.5 302.0C322.2 302.4 321.1 301.7 323.0 300.0Z" fill="#3a2c26" opacity="0.9" filter="url(#b05)"/>
<g clip-path="url(#cFace)">
<ellipse cx="265" cy="312" rx="25" ry="7" fill="#a87c70" opacity="0.6" filter="url(#b2)"/>
<ellipse cx="356" cy="306" rx="26" ry="7" fill="#a87c70" opacity="0.6" filter="url(#b2)"/>
<ellipse cx="266" cy="327" rx="20" ry="4" fill="#c09a90" opacity="0.5" filter="url(#b2)"/>
<ellipse cx="355" cy="322" rx="21" ry="4" fill="#c09a90" opacity="0.5" filter="url(#b2)"/>
</g>
<clipPath id="ce266"><path d="M287.5 320.5Q265.0 301.0 244.5 319.5Q266.0 328.0 287.5 320.5Z"/></clipPath><path d="M287.5 320.5Q265.0 301.0 244.5 319.5Q266.0 328.0 287.5 320.5Z" fill="#efe6e2"/><g clip-path="url(#ce266)"><circle cx="266.7" cy="316.6" r="7.6" fill="#5a3420"/><circle cx="266.7" cy="316.6" r="7.1" fill="none" stroke="#33200f" stroke-width="1.2"/><circle cx="266.7" cy="316.6" r="3.2" fill="#1a100c"/><path d="M287.5 320.5Q265.0 301.0 244.5 319.5" stroke="#3a2a24" stroke-width="4" fill="none" opacity="0.45"/></g><rect x="264.1" y="315.2" width="1.4" height="1.6" fill="#fff"/><rect x="267.5" y="315.2" width="1.4" height="1.6" fill="#fff"/><path d="M244.5 319.0Q261.6 300.2 287.5 320.0" stroke="#2a1e1b" stroke-width="4" fill="none" stroke-linecap="round" filter="url(#b05)"/><path d="M287.5 320.5Q266.0 328.6 244.5 319.5" stroke="#8a6258" stroke-width="1.2" fill="none" opacity="0.7" filter="url(#b05)"/>
<clipPath id="ce353"><path d="M332.5 317.5Q354.0 294.5 377.0 311.5Q354.5 324.5 332.5 317.5Z"/></clipPath><path d="M332.5 317.5Q354.0 294.5 377.0 311.5Q354.5 324.5 332.5 317.5Z" fill="#efe6e2"/><g clip-path="url(#ce353)"><circle cx="353.6" cy="312.3" r="7.8" fill="#5a3420"/><circle cx="353.6" cy="312.3" r="7.3" fill="none" stroke="#33200f" stroke-width="1.2"/><circle cx="353.6" cy="312.3" r="3.3" fill="#1a100c"/><path d="M332.5 317.5Q354.0 294.5 377.0 311.5" stroke="#3a2a24" stroke-width="4" fill="none" opacity="0.45"/></g><rect x="351.0" y="310.9" width="1.4" height="1.6" fill="#fff"/><rect x="354.4" y="310.9" width="1.4" height="1.6" fill="#fff"/><path d="M377.0 311.0Q357.6 293.7 332.5 317.0" stroke="#2a1e1b" stroke-width="4" fill="none" stroke-linecap="round" filter="url(#b05)"/><path d="M332.5 317.5Q354.5 325.1 377.0 311.5" stroke="#8a6258" stroke-width="1.2" fill="none" opacity="0.7" filter="url(#b05)"/>
<path d="M268.0 399.7C270.4 398.4 279.9 397.3 285.4 396.6C290.9 395.9 296.5 395.5 301.2 395.5C305.9 395.5 309.9 397.2 313.8 396.8C317.7 396.4 319.8 394.2 324.8 393.4C329.8 392.6 337.9 391.7 343.7 391.8C349.5 391.9 357.6 391.9 359.5 394.2C361.4 396.4 357.4 400.8 354.8 405.3C352.2 409.8 347.9 416.7 343.7 421.0C339.5 425.3 334.6 429.1 329.6 431.3C324.6 433.5 319.1 434.5 313.8 434.4C308.5 434.3 303.2 433.0 298.0 430.5C292.8 428.0 286.8 423.7 282.3 419.4C277.8 415.1 273.6 407.8 271.2 404.5C268.8 401.2 265.6 401.0 268.0 399.7Z" fill="#ad3343"/>
<clipPath id="cIn"><path d="M272.0 401.0C271.7 399.8 273.9 400.1 277.5 400.5C281.1 400.9 287.2 402.7 293.3 403.4C299.4 404.1 307.0 405.0 313.8 404.5C320.6 404.0 327.7 401.9 334.3 400.5C340.9 399.1 349.4 396.6 353.2 395.8C357.0 395.0 357.4 394.3 357.0 395.5C356.6 396.7 352.7 401.2 351.0 403.0C349.3 404.8 349.7 404.8 346.9 406.5C344.1 408.2 338.8 411.7 334.3 413.5C329.8 415.3 324.8 416.6 320.1 417.3C315.4 418.1 310.9 418.3 305.9 418.0C300.9 417.7 294.6 417.2 290.1 415.5C285.6 413.8 282.1 410.4 279.1 408.0C276.1 405.6 272.3 402.2 272.0 401.0Z"/></clipPath>
<path d="M272.0 401.0C271.7 399.8 273.9 400.1 277.5 400.5C281.1 400.9 287.2 402.7 293.3 403.4C299.4 404.1 307.0 405.0 313.8 404.5C320.6 404.0 327.7 401.9 334.3 400.5C340.9 399.1 349.4 396.6 353.2 395.8C357.0 395.0 357.4 394.3 357.0 395.5C356.6 396.7 352.7 401.2 351.0 403.0C349.3 404.8 349.7 404.8 346.9 406.5C344.1 408.2 338.8 411.7 334.3 413.5C329.8 415.3 324.8 416.6 320.1 417.3C315.4 418.1 310.9 418.3 305.9 418.0C300.9 417.7 294.6 417.2 290.1 415.5C285.6 413.8 282.1 410.4 279.1 408.0C276.1 405.6 272.3 402.2 272.0 401.0Z" fill="#3e1519"/>
<g clip-path="url(#cIn)">
<path d="M277.5 401.0C279.6 400.2 287.2 402.8 293.3 403.4C299.4 404.0 307.0 405.0 313.8 404.5C320.6 404.0 327.9 401.8 334.3 400.5C340.7 399.2 349.9 395.7 352.0 396.5C354.1 397.3 349.8 402.7 346.9 405.3C343.9 407.9 338.8 410.5 334.3 412.3C329.8 414.1 324.8 415.5 320.1 416.3C315.4 417.1 310.9 417.4 305.9 417.1C300.9 416.8 294.2 416.2 290.1 414.7C286.0 413.2 283.1 410.3 281.0 408.0C278.9 405.7 275.4 401.8 277.5 401.0Z" fill="#f0e9de"/>
<path d="M285.5 402.0L285.5 412.0" stroke="#b9ab9c" stroke-width="0.8"/>
<path d="M292.5 403.0L292.5 415.5" stroke="#b9ab9c" stroke-width="0.8"/>
<path d="M301.5 404.0L301.5 417.0" stroke="#b9ab9c" stroke-width="0.8"/>
<path d="M313.3 404.5L313.3 417.5" stroke="#b9ab9c" stroke-width="0.8"/>
<path d="M324.5 403.0L324.5 416.0" stroke="#b9ab9c" stroke-width="0.8"/>
<path d="M333.0 401.0L333.0 413.5" stroke="#b9ab9c" stroke-width="0.8"/>
<path d="M340.0 399.5L340.0 410.0" stroke="#b9ab9c" stroke-width="0.8"/>
<path d="M346.0 398.0L346.0 406.0" stroke="#b9ab9c" stroke-width="0.8"/>
<path d="M277.5 401.0C280.1 401.4 287.2 402.8 293.3 403.4C299.4 404.0 307.0 405.0 313.8 404.5C320.6 404.0 327.9 401.8 334.3 400.5C340.7 399.2 349.1 397.2 352.0 396.5" stroke="#6e2a2c" stroke-width="2" fill="none" opacity="0.5"/>
</g>
<path d="M268.0 399.7C269.3 399.1 279.9 397.3 285.4 396.6C290.9 395.9 296.5 395.5 301.2 395.5C305.9 395.5 309.9 397.2 313.8 396.8C317.7 396.4 319.8 394.2 324.8 393.4C329.8 392.6 337.9 391.7 343.7 391.8C349.5 391.9 357.9 393.5 359.5 394.2C361.1 394.9 357.4 394.8 353.2 395.8C349.0 396.9 340.9 399.1 334.3 400.5C327.7 401.9 320.6 404.0 313.8 404.5C307.0 405.0 299.4 404.1 293.3 403.4C287.2 402.7 281.7 401.1 277.5 400.5C273.3 399.9 266.7 400.3 268.0 399.7Z" fill="#9a2a3a"/>
<path d="M290.0 398.5C292.3 398.4 300.0 397.8 304.0 398.0C308.0 398.2 310.3 399.7 314.0 399.5C317.7 399.3 321.3 397.8 326.0 397.0C330.7 396.2 339.3 395.3 342.0 395.0" stroke="#c85a66" stroke-width="1.6" fill="none" opacity="0.6" filter="url(#b05)"/>
<ellipse cx="313" cy="425" rx="17" ry="3" fill="#e08f99" opacity="0.75" filter="url(#b2)"/>
<path d="M274.0 408.0C275.4 409.9 278.3 415.6 282.3 419.4C286.3 423.1 292.8 428.0 298.0 430.5C303.2 433.0 308.5 434.3 313.8 434.4C319.1 434.5 324.6 433.5 329.6 431.3C334.6 429.1 339.8 425.1 343.7 421.0C347.6 416.9 351.4 409.3 353.0 407.0" stroke="#7d1b2a" stroke-width="2.2" fill="none" opacity="0.55" filter="url(#b1)"/>
</symbol>
</defs>
</svg>
<div id="page">
  <!-- background page -->
  <div class="bgtxt" id="t1" style="left:774px;top:-2px;font-size:13.5px;color:#8c8c8c">or drop a file here</div>
  <div class="bgtxt" id="t2" style="left:738px;top:17px;font-size:12.55px;color:#8c8c8c">CTRL+V to paste image or URL</div>
  <div id="card"></div>
  <div class="bgtxt" style="left:267px;top:238.500px;font-size:14.2px;color:#333">Original</div>
  <svg class="abs" style="left:1371px;top:240px" width="14" height="16" viewBox="0 0 14 16"><path d="M1.500 1.800L12.500 14.200M12.500 1.800L1.500 14.200" stroke="#333" stroke-width="2" fill="none"/></svg>
  <div class="abs ck10" style="left:368px;top:295px;width:500px;height:500px;overflow:hidden"><svg width="500" height="500" style="display:block"><use href="#portrait" width="500" height="500"/></svg></div>
  <div class="bgtxt" style="left:508px;top:811px;font-size:13px;color:#a8a8a8;letter-spacing:0.05px">Auto Erased by</div>
  <div class="bgtxt" style="left:602.500px;top:811px;font-size:13px;color:#909090;letter-spacing:0.2px;text-decoration:underline">Remove Background</div>
  <div class="bgtxt" style="left:1052px;top:781px;font-size:13px;color:#a8a8a8;letter-spacing:0.19px">Powered by</div>
  <div class="bgtxt" style="left:1127px;top:781px;font-size:13px;color:#909090;letter-spacing:0.32px;text-decoration:underline">reverse image search</div>
  <div class="bgtxt" style="left:1263px;top:781px;font-size:13px;color:#a8a8a8;letter-spacing:0.4px">engine</div>
  <div class="abs" style="left:980px;top:700px;width:72px;height:50px;border:1px solid #d4d4d4;border-radius:10px;background:#f4f4f4"></div>
  <div class="abs" style="left:1060px;top:700px;width:72px;height:50px;border:1px solid #d4d4d4;border-radius:10px;background:#f4f4f4"></div>
  <div class="abs" style="left:1140px;top:700px;width:72px;height:50px;border:1px solid #d4d4d4;border-radius:10px;background:#f4f4f4"></div>
  <div class="abs" style="left:1220px;top:700px;width:72px;height:50px;border:1px solid #d4d4d4;border-radius:10px;background:#f4f4f4"></div>
  <div class="abs" style="left:1300px;top:700px;width:72px;height:50px;border:1px solid #d4d4d4;border-radius:10px;background:#f4f4f4"></div>
  <div id="overlay"></div>
  <div id="mshadow"></div>
  <div id="modal">
    <div id="side">
      <svg class="abs" style="left:17px;top:25px" width="24" height="24" viewBox="0 0 24 24"><path fill="#666" d="M16.24,3.56L21.19,8.5C21.97,9.29 21.97,10.55 21.19,11.34L12,20.53C10.44,22.09 7.91,22.09 6.34,20.53L2.81,17C2.03,16.21 2.03,14.95 2.81,14.16L13.41,3.56C14.2,2.78 15.46,2.78 16.24,3.56M4.22,15.58L7.76,19.11C8.54,19.9 9.8,19.9 10.59,19.11L14.12,15.58L9.17,10.63L4.22,15.58Z"/></svg>
      <div class="abs" style="left:10px;top:74px;width:40px;height:34px;background:#ccc"></div>
      <svg class="abs" style="left:18px;top:79px" width="24" height="24" viewBox="0 0 24 24"><path fill="#616161" d="M17 15h2V7c0-1.1-.9-2-2-2H9v2h8v8zM7 17V1H5v4H1v2h4v10c0 1.1.9 2 2 2h10v4h2v-4h4v-2H7z"/></svg>
    </div>
    <div id="panel">
      <div class="lbl" id="l1" style="left:10px;top:21px;letter-spacing:0.1px">Custom size</div>
      <div class="inp" style="left:10px">800</div>
      <div class="abs" id="xx" style="left:115px;top:79.5px;font-size:18px;color:#222">x</div>
      <div class="inp" style="left:128px;width:101px">800</div>
      <div class="btn" id="apply" style="left:10px;top:138px;width:219px;height:40px;border-radius:6px;font-weight:bold;font-size:15px;line-height:39px;text-indent:-2px">Apply</div>
      <div class="lbl" id="l2" style="left:10px;top:199px">Size Templates</div>
      <div class="tile" style="left:10px;top:232px;border:1px solid #c2416b;color:#d63384;font-size:12px;line-height:60px;text-align:center;letter-spacing:0.6px" id="orig">Original</div>
      <div class="tile" style="left:83px;top:232px"><i style="left:23px;top:23px;width:16px;height:16px"></i></div>
      <div class="tile" style="left:156px;top:232px"><i style="left:22px;top:25px;width:18px;height:12px"></i></div>
      <div class="tile" style="left:10px;top:305px"><i style="left:25px;top:22px;width:12px;height:18px"></i></div>
      <div class="tile" style="left:83px;top:305px"><i style="left:23px;top:25px;width:16px;height:12px"></i></div>
      <div class="tile" style="left:156px;top:305px"><i style="left:25px;top:23px;width:12px;height:16px"></i></div>
      <div class="tile" style="left:10px;top:378px"><i style="left:23px;top:27px;width:16px;height:9px"></i></div>
      <div class="tile" style="left:83px;top:378px"><i style="left:26px;top:23px;width:9px;height:16px"></i></div>
    </div>
    <div id="vline"></div>
    <div id="topbar">
      <svg class="abs" style="left:0;top:0" width="120" height="50" viewBox="0 0 120 50"><g fill="none" stroke="#6a6a6a" stroke-width="1.9" stroke-linecap="round" stroke-linejoin="round"><path d="M29.300 16.900L24.800 20.900L29.300 24.900M24.800 20.900H33.800A5.500 5.500 0 0 1 33.800 31.950H25.700"/><path d="M77.700 16.900L82.300 20.900L77.700 24.900M82.300 20.900H73.400A5.500 5.500 0 0 0 73.400 31.950H81"/></g></svg>
      <div class="btn" id="done" style="left:616px;top:7px;width:120px;height:36px;border-radius:4px;font-size:14px;letter-spacing:2px;line-height:34px;text-indent:1px;-webkit-text-stroke:0.3px #fff;box-shadow:0 3px 1px -2px rgba(0,0,0,.2),0 2px 2px 0 rgba(0,0,0,.14),0 1px 5px 0 rgba(0,0,0,.12)">Done</div>
      <svg class="abs" style="left:756px;top:13px" width="24" height="24" viewBox="0 0 24 24"><path fill="#555" d="M19 6.41L17.59 5 12 10.590 6.41 5 5 6.410 10.590 12 5 17.590 6.410 19 12 13.410 17.590 19 19 17.590 13.410 12z"/></svg>
    </div>
    <div id="canvas">
      <div class="abs" style="left:95px;top:20px;width:610px;height:610px;border:1px solid #a52a2a;box-shadow:0 0 0 1px #fde4e3"></div>
      <div class="abs" style="left:96px;top:21px;width:608px;height:608px;overflow:hidden;background:#fff"><div class="ck" style="left:0;top:0;width:500px;height:500px"></div><div class="ck" style="left:500px;top:0;width:108px;height:500px"></div><div class="ck" style="left:0;top:500px;width:500px;height:108px"></div><div class="ck" style="left:500px;top:500px;width:108px;height:108px"></div><svg width="608" height="608" style="display:block;position:absolute;left:0;top:0"><use href="#portrait" width="608" height="608"/></svg></div>
      <svg class="abs" style="left:94px;top:19px" width="612" height="612" viewBox="0 0 612 612">
        <path d="M0 0h8v8h-8z" fill="#f5f5f5" opacity="0"/>
        <path d="M1 1h6a6 6 0 0 1-6 6z" fill="#111"/>
        <path d="M611 1h-6a6 6 0 0 0 6 6z" fill="#111"/>
        <path d="M1 611h6a6 6 0 0 0-6-6z" fill="#111"/>
        <path d="M611 611h-6a6 6 0 0 1 6-6z" fill="#111"/>
      </svg>
    </div>
  </div>
</div>
</body>
</html>
